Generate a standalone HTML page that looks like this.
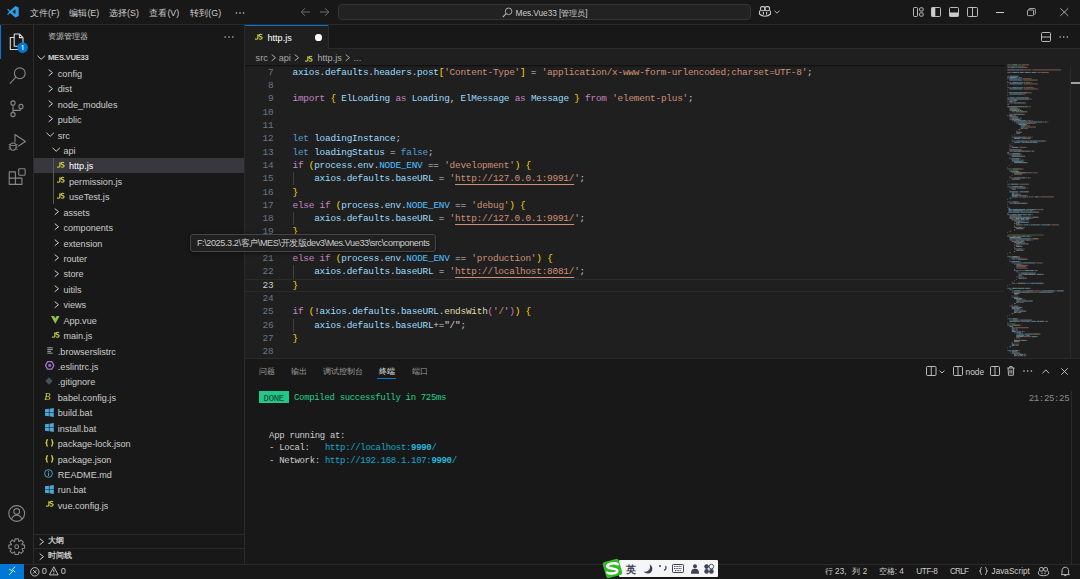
<!DOCTYPE html><html><head><meta charset="utf-8"><style>
*{margin:0;padding:0;box-sizing:border-box}
html,body{width:1080px;height:579px;overflow:hidden;background:#181818}
body{position:relative;font-family:"Liberation Sans", sans-serif;color:#cccccc;font-size:9.1px}
.a{position:absolute;white-space:pre}
.ic{position:absolute;overflow:visible}
.mono{font-family:"Liberation Mono", monospace}
</style></head><body>
<div class="a" style="left:0px;top:0px;width:1080px;height:24px;background:#181818;"></div>
<div class="a" style="left:0px;top:24px;width:1080px;height:1px;background:#2b2b2b;"></div>
<div class="a" style="left:0px;top:25px;width:33px;height:539px;background:#181818;"></div>
<div class="a" style="left:33px;top:25px;width:1px;height:539px;background:#2b2b2b;"></div>
<div class="a" style="left:34px;top:25px;width:210px;height:539px;background:#181818;"></div>
<div class="a" style="left:244px;top:25px;width:1px;height:539px;background:#2b2b2b;"></div>
<div class="a" style="left:245px;top:25px;width:835px;height:334px;background:#1f1f1f;"></div>
<div class="a" style="left:245px;top:25px;width:835px;height:24px;background:#181818;"></div>
<div class="a" style="left:328.5px;top:48.4px;width:751.5px;height:0.8px;background:#2b2b2b;"></div>
<div class="a" style="left:245px;top:24.6px;width:83.5px;height:24.6px;background:#1f1f1f;"></div>
<div class="a" style="left:245px;top:24.6px;width:83.5px;height:1.1px;background:#0078d4;"></div>
<div class="a" style="left:328.3px;top:25px;width:0.8px;height:24px;background:#2b2b2b;"></div>
<div class="a" style="left:245px;top:358.5px;width:835px;height:205.5px;background:#181818;"></div>
<div class="a" style="left:245px;top:358px;width:835px;height:1px;background:#2b2b2b;"></div>
<div class="a" style="left:0px;top:564px;width:1080px;height:15px;background:#181818;"></div>
<div class="a" style="left:0px;top:563.5px;width:1080px;height:0.7px;background:#2b2b2b;"></div>
<div class="a" style="left:0px;top:564px;width:24px;height:15px;background:#0078d4;"></div>
<svg class="ic" style="left:6.5px;top:5.8px;" width="12" height="12" viewBox="0 0 12 12"><path fill-rule="evenodd" d="M8.4 0 L11.7 1.6 V10 L8.4 11.6 L3 6.9 L1 8.9 L0.2 8.2 L2.2 5.8 L0.2 3.4 L1 2.7 L3 4.7 Z M8.4 3.3 L5.4 5.8 L8.4 8.3 Z" fill="#2c9fe6"/></svg>
<div class="a" style="left:30px;top:7.62px;line-height:11.57px;font-size:8.9px;color:#cccccc;">文件(<u style="text-decoration:none">F</u>)</div>
<div class="a" style="left:69.4px;top:7.62px;line-height:11.57px;font-size:8.9px;color:#cccccc;">编辑(E)</div>
<div class="a" style="left:109.1px;top:7.62px;line-height:11.57px;font-size:8.9px;color:#cccccc;">选择(S)</div>
<div class="a" style="left:149.4px;top:7.62px;line-height:11.57px;font-size:8.9px;color:#cccccc;">查看(V)</div>
<div class="a" style="left:190.3px;top:7.62px;line-height:11.57px;font-size:8.9px;color:#cccccc;">转到(G)</div>
<svg class="ic" style="left:233.5px;top:10.7px;" width="12" height="4" viewBox="0 0 12 4"><circle cx="2.4" cy="2" r="0.8" fill="#cccccc"/><circle cx="6" cy="2" r="0.8" fill="#cccccc"/><circle cx="9.6" cy="2" r="0.8" fill="#cccccc"/></svg>
<svg class="ic" style="left:300px;top:7px;" width="11" height="10" viewBox="0 0 11 10"><path d="M10 5 H1.2 M5 1.2 L1.2 5 L5 8.8" stroke="#6b6b6b" stroke-width="1" fill="none"/></svg>
<svg class="ic" style="left:318.5px;top:7px;" width="11" height="10" viewBox="0 0 11 10"><path d="M1 5 H9.8 M6 1.2 L9.8 5 L6 8.8" stroke="#6b6b6b" stroke-width="1" fill="none"/></svg>
<div class="a" style="left:338.3px;top:3.9px;width:412.3px;height:16.1px;background:#222222;border:0.8px solid #353535;border-radius:4px"></div>
<svg class="ic" style="left:502px;top:6.5px;" width="11" height="11" viewBox="0 0 11 11"><circle cx="6.6" cy="4.3" r="3.3" stroke="#bbbbbb" stroke-width="0.9" fill="none"/><path d="M4.2 6.7 L0.8 10.1" stroke="#bbbbbb" stroke-width="1.1"/></svg>
<div class="a" style="left:515.6px;top:7.60px;line-height:10.79px;font-size:8.3px;color:#cccccc;letter-spacing:-0.05px">Mes.Vue33 [管理员]</div>
<svg class="ic" style="left:759.2px;top:6.4px;" width="13" height="11" viewBox="0 0 13 11"><rect x="1.5" y="0.6" width="4.5" height="4.1" rx="1.5" stroke="#cccccc" stroke-width="1.1" fill="none"/><rect x="6" y="0.6" width="4.5" height="4.1" rx="1.5" stroke="#cccccc" stroke-width="1.1" fill="none"/><path d="M1.3 4.4 C0.6 4.9 0.5 5.5 0.5 6.3 V8 C1.9 9.5 3.9 10.2 6 10.2 C8.1 10.2 10.1 9.5 11.5 8 V6.3 C11.5 5.5 11.4 4.9 10.7 4.4" stroke="#cccccc" stroke-width="1.1" fill="none"/><path d="M4.4 6 V8.4 M7.6 6 V8.4" stroke="#cccccc" stroke-width="1.1"/></svg>
<svg class="ic" style="left:774px;top:9.5px;" width="6" height="4" viewBox="0 0 6 4"><path d="M0.5 0.8 L3 3.2 L5.5 0.8" stroke="#cccccc" stroke-width="0.9" fill="none"/></svg>
<svg class="ic" style="left:913px;top:7px;" width="11" height="10" viewBox="0 0 11 10"><rect x="0.5" y="0.5" width="4" height="9" rx="1" stroke="#cccccc" stroke-width="0.9" fill="none"/><rect x="6.6" y="0.8" width="3.6" height="3.2" rx="1" stroke="#cccccc" stroke-width="0.9" fill="none"/><rect x="6.6" y="5.8" width="3.6" height="3.4" rx="1" stroke="#cccccc" stroke-width="0.9" fill="none"/></svg>
<svg class="ic" style="left:930.8px;top:7px;" width="10" height="10" viewBox="0 0 10 10"><rect x="0.5" y="0.5" width="9" height="9" rx="1" stroke="#cccccc" stroke-width="0.9" fill="none"/><rect x="0.5" y="0.5" width="3.8" height="9" fill="#cccccc"/></svg>
<svg class="ic" style="left:948.8px;top:7px;" width="10" height="10" viewBox="0 0 10 10"><rect x="0.5" y="0.5" width="9" height="9" rx="1" stroke="#cccccc" stroke-width="0.9" fill="none"/><rect x="0.5" y="5.5" width="9" height="4" fill="#cccccc"/></svg>
<svg class="ic" style="left:967px;top:7px;" width="11" height="10" viewBox="0 0 11 10"><rect x="0.5" y="0.5" width="10" height="9" rx="1" stroke="#cccccc" stroke-width="0.9" fill="none"/><path d="M5.5 0.5 V9.5" stroke="#cccccc" stroke-width="0.9"/></svg>
<div class="a" style="left:996.3px;top:11.5px;width:7.4px;height:0.8px;background:#cccccc;"></div>
<svg class="ic" style="left:1026.5px;top:8px;" width="9" height="8" viewBox="0 0 9 8"><rect x="0.5" y="2" width="6" height="5.6" rx="0.8" stroke="#cccccc" stroke-width="0.8" fill="none"/><path d="M2 2 V1.5 Q2 0.5 3 0.5 H7.3 Q8.3 0.5 8.3 1.5 V5.6 Q8.3 6.5 7.5 6.5" stroke="#cccccc" stroke-width="0.8" fill="none"/></svg>
<svg class="ic" style="left:1059.7px;top:8.3px;" width="9" height="8" viewBox="0 0 9 8"><path d="M0.3 0.3 L8.3 7.9 M8.3 0.3 L0.3 7.9" stroke="#cccccc" stroke-width="0.8"/></svg>
<div class="a" style="left:0px;top:24.6px;width:1.4px;height:34px;background:#0078d4;"></div>
<svg class="ic" style="left:8.5px;top:32.5px;" width="17" height="19" viewBox="0 0 17 19"><path d="M5.2 1 H10.4 L14 4.6 V13.2 H5.2 Z M10.4 1 V4.6 H14" stroke="#d7d7d7" stroke-width="1.1" fill="none" stroke-linejoin="round"/><path d="M5.2 4.5 H1.3 V16.5 H10 V13.2" stroke="#d7d7d7" stroke-width="1.1" fill="none"/></svg>
<svg class="ic" style="left:17px;top:41.7px;" width="11.2" height="11.2" viewBox="0 0 11.2 11.2"><circle cx="5.6" cy="5.6" r="5.3" fill="#0078d4"/><path d="M4.6 4.1 L5.9 3.3 V8" stroke="#ffffff" stroke-width="1" fill="none"/></svg>
<svg class="ic" style="left:8.6px;top:66.7px;" width="17" height="18" viewBox="0 0 17 18"><circle cx="10.8" cy="6.3" r="5.4" stroke="#868686" stroke-width="1.1" fill="none"/><path d="M6.9 10.2 L0.9 16.6" stroke="#868686" stroke-width="1.1"/></svg>
<svg class="ic" style="left:9.7px;top:100.2px;" width="14" height="18" viewBox="0 0 14 18"><circle cx="3" cy="3" r="2.1" stroke="#868686" stroke-width="1.1" fill="none"/><circle cx="3" cy="14.5" r="2.1" stroke="#868686" stroke-width="1.1" fill="none"/><circle cx="11" cy="6.5" r="2.1" stroke="#868686" stroke-width="1.1" fill="none"/><path d="M3 5.1 V12.4 M11 8.6 V9 C11 9.9 10.4 10.4 9.5 10.4 H3" stroke="#868686" stroke-width="1.1" fill="none"/></svg>
<svg class="ic" style="left:7.6px;top:133px;" width="18" height="19" viewBox="0 0 18 19"><path d="M7 9.3 V1.5 L17.4 8.5 L10.2 13.2" stroke="#868686" stroke-width="1.1" fill="none" stroke-linejoin="round"/><ellipse cx="5.1" cy="13.6" rx="3.1" ry="3.6" stroke="#868686" stroke-width="1.1" fill="none"/><path d="M0.6 11.5 H2 M8.2 11.5 H9.6 M0.6 14 H2 M8.2 14 H9.6 M0.6 16.3 H2 M8.2 16.3 H9.6 M2.5 12.5 H7.7" stroke="#868686" stroke-width="0.9"/></svg>
<svg class="ic" style="left:7.6px;top:167.6px;" width="18" height="18" viewBox="0 0 18 18"><path d="M1.2 3.9 H7.4 V10.1 H13.9 V16.4 H1.2 Z M7.4 10.1 V16.4 M1.2 10.1 H7.4" stroke="#868686" stroke-width="1.1" fill="none" stroke-linejoin="round"/><rect x="10.7" y="0.8" width="6.4" height="6.4" rx="0.6" stroke="#868686" stroke-width="1.1" fill="none"/></svg>
<svg class="ic" style="left:8.2px;top:504.9px;" width="18" height="18" viewBox="0 0 18 18"><circle cx="8.7" cy="8.5" r="7.9" stroke="#868686" stroke-width="1.1" fill="none"/><circle cx="8.7" cy="6.5" r="2.9" stroke="#868686" stroke-width="1.1" fill="none"/><path d="M3.6 14.3 C4.5 11.2 6.2 10.3 8.7 10.3 C11.2 10.3 12.9 11.2 13.8 14.3" stroke="#868686" stroke-width="1.1" fill="none"/></svg>
<svg class="ic" style="left:8.2px;top:537.6px;" width="18" height="18" viewBox="0 0 18 18"><path d="M16.54 7.11 L16.54 10.29 L14.01 10.76 L13.92 11.00 L15.37 13.12 L13.12 15.37 L11.00 13.92 L10.76 14.01 L10.29 16.54 L7.11 16.54 L6.64 14.01 L6.40 13.92 L4.28 15.37 L2.03 13.12 L3.48 11.00 L3.39 10.76 L0.86 10.29 L0.86 7.11 L3.39 6.64 L3.48 6.40 L2.03 4.28 L4.28 2.03 L6.40 3.48 L6.64 3.39 L7.11 0.86 L10.29 0.86 L10.76 3.39 L11.00 3.48 L13.12 2.03 L15.37 4.28 L13.92 6.40 L14.01 6.64 Z" stroke="#868686" stroke-width="1.1" fill="none" stroke-linejoin="round"/><circle cx="8.7" cy="8.7" r="1.9" stroke="#868686" stroke-width="1.1" fill="none"/></svg>
<div class="a" style="left:47.9px;top:32.13px;line-height:10.14px;font-size:7.8px;color:#cccccc;">资源管理器</div>
<svg class="ic" style="left:222.5px;top:35px;" width="12" height="4" viewBox="0 0 12 4"><circle cx="2.1" cy="2" r="0.75" fill="#cccccc"/><circle cx="6" cy="2" r="0.75" fill="#cccccc"/><circle cx="9.9" cy="2" r="0.75" fill="#cccccc"/></svg>
<svg class="ic" style="left:37.0px;top:55.1px;" width="9" height="6" viewBox="0 0 9 6"><path d="M0.5 0.8 L4.2 4.3 L7.9 0.8" stroke="#cccccc" stroke-width="1" fill="none"/></svg>
<div class="a" style="left:48px;top:52.79px;line-height:10.01px;font-size:7.7px;color:#cccccc;font-weight:bold;letter-spacing:-0.3px">MES.VUE33</div>
<div class="a" style="left:33.6px;top:157.57999999999998px;width:210.6px;height:15.43px;background:#37373d;"></div>
<div class="a" style="left:53.1px;top:157.57999999999998px;width:0.8px;height:46.29px;background:#585858;"></div>
<svg class="ic" style="left:47.9px;top:69.11500000000001px;" width="6" height="8" viewBox="0 0 6 8"><path d="M0.7 0.6 L4.5 3.7 L0.7 6.8" stroke="#cccccc" stroke-width="1" fill="none"/></svg>
<div class="a" style="left:57.8px;top:68.80px;line-height:11.83px;font-size:9.1px;color:#cccccc;">config</div>
<svg class="ic" style="left:47.9px;top:84.54500000000002px;" width="6" height="8" viewBox="0 0 6 8"><path d="M0.7 0.6 L4.5 3.7 L0.7 6.8" stroke="#cccccc" stroke-width="1" fill="none"/></svg>
<div class="a" style="left:57.8px;top:84.23px;line-height:11.83px;font-size:9.1px;color:#cccccc;">dist</div>
<svg class="ic" style="left:47.9px;top:99.97500000000001px;" width="6" height="8" viewBox="0 0 6 8"><path d="M0.7 0.6 L4.5 3.7 L0.7 6.8" stroke="#cccccc" stroke-width="1" fill="none"/></svg>
<div class="a" style="left:57.8px;top:99.66px;line-height:11.83px;font-size:9.1px;color:#cccccc;">node_modules</div>
<svg class="ic" style="left:47.9px;top:115.405px;" width="6" height="8" viewBox="0 0 6 8"><path d="M0.7 0.6 L4.5 3.7 L0.7 6.8" stroke="#cccccc" stroke-width="1" fill="none"/></svg>
<div class="a" style="left:57.8px;top:115.09px;line-height:11.83px;font-size:9.1px;color:#cccccc;">public</div>
<svg class="ic" style="left:46.199999999999996px;top:132.035px;" width="9" height="6" viewBox="0 0 9 6"><path d="M0.5 0.8 L4.2 4.3 L7.9 0.8" stroke="#cccccc" stroke-width="1" fill="none"/></svg>
<div class="a" style="left:57.8px;top:130.52px;line-height:11.83px;font-size:9.1px;color:#cccccc;">src</div>
<svg class="ic" style="left:51.8px;top:147.465px;" width="9" height="6" viewBox="0 0 9 6"><path d="M0.5 0.8 L4.2 4.3 L7.9 0.8" stroke="#cccccc" stroke-width="1" fill="none"/></svg>
<div class="a" style="left:63.4px;top:145.95px;line-height:11.83px;font-size:9.1px;color:#cccccc;">api</div>
<svg class="ic" style="left:57.1px;top:161.99499999999998px;" width="9" height="7" viewBox="0 0 9 7"><path transform="scale(0.93,0.86)" d="M3.1 0.4 V4.3 C3.1 5.6 2.5 6.1 1.6 6.1 C1 6.1 0.6 5.9 0.3 5.4 M7.5 1 C7.2 0.5 6.6 0.3 6 0.3 C5.1 0.3 4.5 0.8 4.5 1.6 C4.5 3.3 7.6 2.8 7.6 4.5 C7.6 5.5 6.9 6.1 6 6.1 C5.2 6.1 4.6 5.8 4.2 5.2" stroke="#cbcb41" stroke-width="1.35" fill="none"/></svg>
<div class="a" style="left:69.0px;top:161.38px;line-height:11.83px;font-size:9.1px;color:#ffffff;">http.js</div>
<svg class="ic" style="left:57.1px;top:177.42499999999998px;" width="9" height="7" viewBox="0 0 9 7"><path transform="scale(0.93,0.86)" d="M3.1 0.4 V4.3 C3.1 5.6 2.5 6.1 1.6 6.1 C1 6.1 0.6 5.9 0.3 5.4 M7.5 1 C7.2 0.5 6.6 0.3 6 0.3 C5.1 0.3 4.5 0.8 4.5 1.6 C4.5 3.3 7.6 2.8 7.6 4.5 C7.6 5.5 6.9 6.1 6 6.1 C5.2 6.1 4.6 5.8 4.2 5.2" stroke="#cbcb41" stroke-width="1.35" fill="none"/></svg>
<div class="a" style="left:69.0px;top:176.81px;line-height:11.83px;font-size:9.1px;color:#cccccc;">permission.js</div>
<svg class="ic" style="left:57.1px;top:192.855px;" width="9" height="7" viewBox="0 0 9 7"><path transform="scale(0.93,0.86)" d="M3.1 0.4 V4.3 C3.1 5.6 2.5 6.1 1.6 6.1 C1 6.1 0.6 5.9 0.3 5.4 M7.5 1 C7.2 0.5 6.6 0.3 6 0.3 C5.1 0.3 4.5 0.8 4.5 1.6 C4.5 3.3 7.6 2.8 7.6 4.5 C7.6 5.5 6.9 6.1 6 6.1 C5.2 6.1 4.6 5.8 4.2 5.2" stroke="#cbcb41" stroke-width="1.35" fill="none"/></svg>
<div class="a" style="left:69.0px;top:192.24px;line-height:11.83px;font-size:9.1px;color:#cccccc;">useTest.js</div>
<svg class="ic" style="left:53.5px;top:207.985px;" width="6" height="8" viewBox="0 0 6 8"><path d="M0.7 0.6 L4.5 3.7 L0.7 6.8" stroke="#cccccc" stroke-width="1" fill="none"/></svg>
<div class="a" style="left:63.4px;top:207.67px;line-height:11.83px;font-size:9.1px;color:#cccccc;">assets</div>
<svg class="ic" style="left:53.5px;top:223.41500000000002px;" width="6" height="8" viewBox="0 0 6 8"><path d="M0.7 0.6 L4.5 3.7 L0.7 6.8" stroke="#cccccc" stroke-width="1" fill="none"/></svg>
<div class="a" style="left:63.4px;top:223.10px;line-height:11.83px;font-size:9.1px;color:#cccccc;">components</div>
<svg class="ic" style="left:53.5px;top:238.845px;" width="6" height="8" viewBox="0 0 6 8"><path d="M0.7 0.6 L4.5 3.7 L0.7 6.8" stroke="#cccccc" stroke-width="1" fill="none"/></svg>
<div class="a" style="left:63.4px;top:238.53px;line-height:11.83px;font-size:9.1px;color:#cccccc;">extension</div>
<svg class="ic" style="left:53.5px;top:254.275px;" width="6" height="8" viewBox="0 0 6 8"><path d="M0.7 0.6 L4.5 3.7 L0.7 6.8" stroke="#cccccc" stroke-width="1" fill="none"/></svg>
<div class="a" style="left:63.4px;top:253.96px;line-height:11.83px;font-size:9.1px;color:#cccccc;">router</div>
<svg class="ic" style="left:53.5px;top:269.705px;" width="6" height="8" viewBox="0 0 6 8"><path d="M0.7 0.6 L4.5 3.7 L0.7 6.8" stroke="#cccccc" stroke-width="1" fill="none"/></svg>
<div class="a" style="left:63.4px;top:269.39px;line-height:11.83px;font-size:9.1px;color:#cccccc;">store</div>
<svg class="ic" style="left:53.5px;top:285.13499999999993px;" width="6" height="8" viewBox="0 0 6 8"><path d="M0.7 0.6 L4.5 3.7 L0.7 6.8" stroke="#cccccc" stroke-width="1" fill="none"/></svg>
<div class="a" style="left:63.4px;top:284.82px;line-height:11.83px;font-size:9.1px;color:#cccccc;">uitils</div>
<svg class="ic" style="left:53.5px;top:300.56499999999994px;" width="6" height="8" viewBox="0 0 6 8"><path d="M0.7 0.6 L4.5 3.7 L0.7 6.8" stroke="#cccccc" stroke-width="1" fill="none"/></svg>
<div class="a" style="left:63.4px;top:300.25px;line-height:11.83px;font-size:9.1px;color:#cccccc;">views</div>
<svg class="ic" style="left:51.3px;top:315.59499999999997px;" width="9" height="8.2" viewBox="0 0 9 8.2"><path d="M0 0 H3 L4.3 2.3 L5.6 0 H8.6 L4.3 7.8 Z" fill="#8dc149"/></svg>
<div class="a" style="left:63.4px;top:315.68px;line-height:11.83px;font-size:9.1px;color:#cccccc;">App.vue</div>
<svg class="ic" style="left:51.49999999999999px;top:331.725px;" width="9" height="7" viewBox="0 0 9 7"><path transform="scale(0.93,0.86)" d="M3.1 0.4 V4.3 C3.1 5.6 2.5 6.1 1.6 6.1 C1 6.1 0.6 5.9 0.3 5.4 M7.5 1 C7.2 0.5 6.6 0.3 6 0.3 C5.1 0.3 4.5 0.8 4.5 1.6 C4.5 3.3 7.6 2.8 7.6 4.5 C7.6 5.5 6.9 6.1 6 6.1 C5.2 6.1 4.6 5.8 4.2 5.2" stroke="#cbcb41" stroke-width="1.35" fill="none"/></svg>
<div class="a" style="left:63.4px;top:331.11px;line-height:11.83px;font-size:9.1px;color:#cccccc;">main.js</div>
<svg class="ic" style="left:47.199999999999996px;top:346.85499999999996px;" width="7" height="7" viewBox="0 0 7 7"><path d="M0.3 0.8 H5.8 M0.3 2.6 H5.8 M0.3 4.4 H4 M0.3 6.2 H5.8" stroke="#9aa0a6" stroke-width="1"/></svg>
<div class="a" style="left:57.8px;top:346.54px;line-height:11.83px;font-size:9.1px;color:#cccccc;">.browserslistrc</div>
<svg class="ic" style="left:44.599999999999994px;top:361.485px;" width="10" height="9" viewBox="0 0 10 9"><path d="M2.6 0.6 H6.8 L8.9 4.4 L6.8 8.2 H2.6 L0.5 4.4 Z" fill="none" stroke="#a074c4" stroke-width="1.3" stroke-linejoin="round"/><circle cx="4.7" cy="4.4" r="1.7" fill="#8f5fc0"/></svg>
<div class="a" style="left:57.8px;top:361.97px;line-height:11.83px;font-size:9.1px;color:#cccccc;">.eslintrc.js</div>
<svg class="ic" style="left:44.8px;top:377.315px;" width="8" height="8" viewBox="0 0 8 8"><path d="M4 0.3 L7.7 4 L4 7.7 L0.3 4 Z" fill="#41535b"/></svg>
<div class="a" style="left:57.8px;top:377.40px;line-height:11.83px;font-size:9.1px;color:#cccccc;">.gitignore</div>
<div class="a" style="left:44.30px;top:391.74px;font-size:10px;line-height:10px;color:#cbcb41;font-style:italic;font-family:'Liberation Serif',serif">B</div>
<div class="a" style="left:57.8px;top:392.83px;line-height:11.83px;font-size:9.1px;color:#cccccc;">babel.config.js</div>
<svg class="ic" style="left:44.5px;top:407.87499999999994px;" width="9" height="10" viewBox="0 0 9 10"><path d="M0 1.3 L3.9 0.8 V4.2 H0 Z M4.5 0.7 L8.8 0.1 V4.2 H4.5 Z M0 4.8 H3.9 V8.2 L0 7.7 Z M4.5 4.8 H8.8 V8.9 L4.5 8.3 Z" fill="#4fa7d8"/></svg>
<div class="a" style="left:57.8px;top:408.26px;line-height:11.83px;font-size:9.1px;color:#cccccc;">build.bat</div>
<svg class="ic" style="left:44.5px;top:423.30499999999995px;" width="9" height="10" viewBox="0 0 9 10"><path d="M0 1.3 L3.9 0.8 V4.2 H0 Z M4.5 0.7 L8.8 0.1 V4.2 H4.5 Z M0 4.8 H3.9 V8.2 L0 7.7 Z M4.5 4.8 H8.8 V8.9 L4.5 8.3 Z" fill="#4fa7d8"/></svg>
<div class="a" style="left:57.8px;top:423.69px;line-height:11.83px;font-size:9.1px;color:#cccccc;">install.bat</div>
<svg class="ic" style="left:44.8px;top:439.335px;" width="9" height="8" viewBox="0 0 9 8"><path d="M2.9 0.6 C2 0.6 1.7 1 1.7 1.8 V2.9 C1.7 3.5 1.3 3.8 0.4 3.8 C1.3 3.8 1.7 4.1 1.7 4.7 V5.8 C1.7 6.6 2 7 2.9 7 M6.1 0.6 C7 0.6 7.3 1 7.3 1.8 V2.9 C7.3 3.5 7.7 3.8 8.6 3.8 C7.7 3.8 7.3 4.1 7.3 4.7 V5.8 C7.3 6.6 7 7 6.1 7" stroke="#cbcb41" stroke-width="1.3" fill="none"/></svg>
<div class="a" style="left:57.8px;top:439.12px;line-height:11.83px;font-size:9.1px;color:#cccccc;">package-lock.json</div>
<svg class="ic" style="left:44.8px;top:454.765px;" width="9" height="8" viewBox="0 0 9 8"><path d="M2.9 0.6 C2 0.6 1.7 1 1.7 1.8 V2.9 C1.7 3.5 1.3 3.8 0.4 3.8 C1.3 3.8 1.7 4.1 1.7 4.7 V5.8 C1.7 6.6 2 7 2.9 7 M6.1 0.6 C7 0.6 7.3 1 7.3 1.8 V2.9 C7.3 3.5 7.7 3.8 8.6 3.8 C7.7 3.8 7.3 4.1 7.3 4.7 V5.8 C7.3 6.6 7 7 6.1 7" stroke="#cbcb41" stroke-width="1.3" fill="none"/></svg>
<div class="a" style="left:57.8px;top:454.55px;line-height:11.83px;font-size:9.1px;color:#cccccc;">package.json</div>
<svg class="ic" style="left:44.3px;top:469.495px;" width="9" height="9" viewBox="0 0 9 9"><circle cx="4.5" cy="4.5" r="3.9" stroke="#519aba" stroke-width="1" fill="none"/><path d="M4.5 3.6 V7" stroke="#519aba" stroke-width="1.1"/><circle cx="4.5" cy="2.3" r="0.6" fill="#519aba"/></svg>
<div class="a" style="left:57.8px;top:469.98px;line-height:11.83px;font-size:9.1px;color:#cccccc;">README.md</div>
<svg class="ic" style="left:44.5px;top:485.025px;" width="9" height="10" viewBox="0 0 9 10"><path d="M0 1.3 L3.9 0.8 V4.2 H0 Z M4.5 0.7 L8.8 0.1 V4.2 H4.5 Z M0 4.8 H3.9 V8.2 L0 7.7 Z M4.5 4.8 H8.8 V8.9 L4.5 8.3 Z" fill="#4fa7d8"/></svg>
<div class="a" style="left:57.8px;top:485.41px;line-height:11.83px;font-size:9.1px;color:#cccccc;">run.bat</div>
<svg class="ic" style="left:45.9px;top:501.455px;" width="9" height="7" viewBox="0 0 9 7"><path transform="scale(0.93,0.86)" d="M3.1 0.4 V4.3 C3.1 5.6 2.5 6.1 1.6 6.1 C1 6.1 0.6 5.9 0.3 5.4 M7.5 1 C7.2 0.5 6.6 0.3 6 0.3 C5.1 0.3 4.5 0.8 4.5 1.6 C4.5 3.3 7.6 2.8 7.6 4.5 C7.6 5.5 6.9 6.1 6 6.1 C5.2 6.1 4.6 5.8 4.2 5.2" stroke="#cbcb41" stroke-width="1.35" fill="none"/></svg>
<div class="a" style="left:57.8px;top:500.84px;line-height:11.83px;font-size:9.1px;color:#cccccc;">vue.config.js</div>
<div class="a" style="left:34px;top:533.6px;width:210px;height:0.8px;background:#2b2b2b;"></div>
<div class="a" style="left:34px;top:548.1px;width:210px;height:0.8px;background:#2b2b2b;"></div>
<svg class="ic" style="left:39px;top:537.9px;" width="6" height="8" viewBox="0 0 6 8"><path d="M0.7 0.6 L4.5 3.7 L0.7 6.8" stroke="#cccccc" stroke-width="1" fill="none"/></svg>
<div class="a" style="left:47.8px;top:536.23px;line-height:10.14px;font-size:7.8px;color:#cccccc;font-weight:bold">大纲</div>
<svg class="ic" style="left:39px;top:552.8px;" width="6" height="8" viewBox="0 0 6 8"><path d="M0.7 0.6 L4.5 3.7 L0.7 6.8" stroke="#cccccc" stroke-width="1" fill="none"/></svg>
<div class="a" style="left:47.8px;top:551.13px;line-height:10.14px;font-size:7.8px;color:#cccccc;font-weight:bold">时间线</div>
<!--BODY2-->
<svg class="ic" style="left:254.70000000000002px;top:34.0px;" width="9" height="7" viewBox="0 0 9 7"><path transform="scale(0.93,0.86)" d="M3.1 0.4 V4.3 C3.1 5.6 2.5 6.1 1.6 6.1 C1 6.1 0.6 5.9 0.3 5.4 M7.5 1 C7.2 0.5 6.6 0.3 6 0.3 C5.1 0.3 4.5 0.8 4.5 1.6 C4.5 3.3 7.6 2.8 7.6 4.5 C7.6 5.5 6.9 6.1 6 6.1 C5.2 6.1 4.6 5.8 4.2 5.2" stroke="#cbcb41" stroke-width="1.35" fill="none"/></svg>
<div class="a" style="left:267.5px;top:32.59px;line-height:11.83px;font-size:9.1px;color:#ffffff;">http.js</div>
<div class="a" style="left:315.2px;top:34.2px;width:6.7px;height:6.7px;background:#ffffff;border-radius:50%"></div>
<svg class="ic" style="left:1041.1px;top:31.9px;" width="10" height="10" viewBox="0 0 10 10"><rect x="0.5" y="0.5" width="9" height="9" rx="1" stroke="#cccccc" stroke-width="0.9" fill="none"/><path d="M0.5 5 H9.5" stroke="#cccccc" stroke-width="0.9"/></svg>
<svg class="ic" style="left:1058px;top:35px;" width="12" height="4" viewBox="0 0 12 4"><circle cx="2.1" cy="2" r="0.75" fill="#cccccc"/><circle cx="5.7" cy="2" r="0.75" fill="#cccccc"/><circle cx="9.3" cy="2" r="0.75" fill="#cccccc"/></svg>
<div class="a" style="left:255.6px;top:52.79px;line-height:11.83px;font-size:9.1px;color:#a9a9a9;">src</div>
<svg class="ic" style="left:270.6px;top:54.0px;" width="6" height="8" viewBox="0 0 6 8"><path d="M0.7 0.6 L4.5 3.7 L0.7 6.8" stroke="#a9a9a9" stroke-width="1" fill="none"/></svg>
<div class="a" style="left:278.7px;top:52.79px;line-height:11.83px;font-size:9.1px;color:#a9a9a9;">api</div>
<svg class="ic" style="left:294.2px;top:54.0px;" width="6" height="8" viewBox="0 0 6 8"><path d="M0.7 0.6 L4.5 3.7 L0.7 6.8" stroke="#a9a9a9" stroke-width="1" fill="none"/></svg>
<svg class="ic" style="left:304.9px;top:56.4px;" width="9" height="7" viewBox="0 0 9 7"><path transform="scale(0.93,0.86)" d="M3.1 0.4 V4.3 C3.1 5.6 2.5 6.1 1.6 6.1 C1 6.1 0.6 5.9 0.3 5.4 M7.5 1 C7.2 0.5 6.6 0.3 6 0.3 C5.1 0.3 4.5 0.8 4.5 1.6 C4.5 3.3 7.6 2.8 7.6 4.5 C7.6 5.5 6.9 6.1 6 6.1 C5.2 6.1 4.6 5.8 4.2 5.2" stroke="#cbcb41" stroke-width="1.35" fill="none"/></svg>
<div class="a" style="left:317.5px;top:52.79px;line-height:11.83px;font-size:9.1px;color:#a9a9a9;">http.js</div>
<svg class="ic" style="left:345.4px;top:54.0px;" width="6" height="8" viewBox="0 0 6 8"><path d="M0.7 0.6 L4.5 3.7 L0.7 6.8" stroke="#a9a9a9" stroke-width="1" fill="none"/></svg>
<div class="a" style="left:353.6px;top:52.79px;line-height:11.83px;font-size:9.1px;color:#a9a9a9;">...</div>
<div class="a" style="left:245px;top:64.8px;width:760px;height:2.5px;background:linear-gradient(#0d0d0d,rgba(0,0,0,0))"></div>
<div class="a" style="left:245px;top:279.1px;width:758.5px;height:12.6px;background:transparent;border-top:0.9px solid #2a2a2a;border-bottom:0.9px solid #2a2a2a"></div>
<div class="a" style="left:292.8px;top:172.2px;width:0.8px;height:13.3px;background:#404040;"></div>
<div class="a" style="left:292.8px;top:212.10000000000002px;width:0.8px;height:13.3px;background:#404040;"></div>
<div class="a" style="left:292.8px;top:265.3px;width:0.8px;height:13.3px;background:#404040;"></div>
<div class="a" style="left:292.8px;top:318.5px;width:0.8px;height:13.3px;background:#404040;"></div>
<div class="a mono" style="left:245px;width:28.4px;text-align:right;top:65.80px;height:13.3px;line-height:13.3px;font-size:9.4px;letter-spacing:-0.21px;color:#6e7681">7</div>
<div class="a mono" style="left:292.5px;top:65.80px;height:13.3px;line-height:13.3px;font-size:9.4px;letter-spacing:-0.21px"><span style="color:#9cdcfe">axios</span><span style="color:#cccccc">.</span><span style="color:#9cdcfe">defaults</span><span style="color:#cccccc">.</span><span style="color:#9cdcfe">headers</span><span style="color:#cccccc">.</span><span style="color:#9cdcfe">post</span><span style="color:#ffd700">[</span><span style="color:#ce9178">&#x27;Content-Type&#x27;</span><span style="color:#ffd700">]</span><span style="color:#cccccc"> = </span><span style="color:#ce9178">&#x27;application/x-www-form-urlencoded;charset=UTF-8&#x27;</span><span style="color:#cccccc">;</span></div>
<div class="a mono" style="left:245px;width:28.4px;text-align:right;top:79.10px;height:13.3px;line-height:13.3px;font-size:9.4px;letter-spacing:-0.21px;color:#6e7681">8</div>
<div class="a mono" style="left:245px;width:28.4px;text-align:right;top:92.40px;height:13.3px;line-height:13.3px;font-size:9.4px;letter-spacing:-0.21px;color:#6e7681">9</div>
<div class="a mono" style="left:292.5px;top:92.40px;height:13.3px;line-height:13.3px;font-size:9.4px;letter-spacing:-0.21px"><span style="color:#c586c0">import</span><span style="color:#cccccc"> </span><span style="color:#ffd700">{</span><span style="color:#cccccc"> </span><span style="color:#9cdcfe">ElLoading</span><span style="color:#cccccc"> </span><span style="color:#c586c0">as</span><span style="color:#cccccc"> </span><span style="color:#9cdcfe">Loading</span><span style="color:#cccccc">, </span><span style="color:#9cdcfe">ElMessage</span><span style="color:#cccccc"> </span><span style="color:#c586c0">as</span><span style="color:#cccccc"> </span><span style="color:#9cdcfe">Message</span><span style="color:#cccccc"> </span><span style="color:#ffd700">}</span><span style="color:#cccccc"> </span><span style="color:#c586c0">from</span><span style="color:#cccccc"> </span><span style="color:#ce9178">&#x27;element-plus&#x27;</span><span style="color:#cccccc">;</span></div>
<div class="a mono" style="left:245px;width:28.4px;text-align:right;top:105.70px;height:13.3px;line-height:13.3px;font-size:9.4px;letter-spacing:-0.21px;color:#6e7681">10</div>
<div class="a mono" style="left:245px;width:28.4px;text-align:right;top:119.00px;height:13.3px;line-height:13.3px;font-size:9.4px;letter-spacing:-0.21px;color:#6e7681">11</div>
<div class="a mono" style="left:245px;width:28.4px;text-align:right;top:132.30px;height:13.3px;line-height:13.3px;font-size:9.4px;letter-spacing:-0.21px;color:#6e7681">12</div>
<div class="a mono" style="left:292.5px;top:132.30px;height:13.3px;line-height:13.3px;font-size:9.4px;letter-spacing:-0.21px"><span style="color:#569cd6">let</span><span style="color:#cccccc"> </span><span style="color:#9cdcfe">loadingInstance</span><span style="color:#cccccc">;</span></div>
<div class="a mono" style="left:245px;width:28.4px;text-align:right;top:145.60px;height:13.3px;line-height:13.3px;font-size:9.4px;letter-spacing:-0.21px;color:#6e7681">13</div>
<div class="a mono" style="left:292.5px;top:145.60px;height:13.3px;line-height:13.3px;font-size:9.4px;letter-spacing:-0.21px"><span style="color:#569cd6">let</span><span style="color:#cccccc"> </span><span style="color:#9cdcfe">loadingStatus</span><span style="color:#cccccc"> = </span><span style="color:#569cd6">false</span><span style="color:#cccccc">;</span></div>
<div class="a mono" style="left:245px;width:28.4px;text-align:right;top:158.90px;height:13.3px;line-height:13.3px;font-size:9.4px;letter-spacing:-0.21px;color:#6e7681">14</div>
<div class="a mono" style="left:292.5px;top:158.90px;height:13.3px;line-height:13.3px;font-size:9.4px;letter-spacing:-0.21px"><span style="color:#c586c0">if</span><span style="color:#cccccc"> </span><span style="color:#ffd700">(</span><span style="color:#9cdcfe">process</span><span style="color:#cccccc">.</span><span style="color:#9cdcfe">env</span><span style="color:#cccccc">.</span><span style="color:#4fc1ff">NODE_ENV</span><span style="color:#cccccc"> == </span><span style="color:#ce9178">&#x27;development&#x27;</span><span style="color:#ffd700">)</span><span style="color:#cccccc"> </span><span style="color:#ffd700">{</span></div>
<div class="a mono" style="left:245px;width:28.4px;text-align:right;top:172.20px;height:13.3px;line-height:13.3px;font-size:9.4px;letter-spacing:-0.21px;color:#6e7681">15</div>
<div class="a mono" style="left:292.5px;top:172.20px;height:13.3px;line-height:13.3px;font-size:9.4px;letter-spacing:-0.21px"><span style="color:#cccccc">    </span><span style="color:#9cdcfe">axios</span><span style="color:#cccccc">.</span><span style="color:#9cdcfe">defaults</span><span style="color:#cccccc">.</span><span style="color:#9cdcfe">baseURL</span><span style="color:#cccccc"> = </span><span style="color:#ce9178">&#x27;</span><span style="color:#ce9178;text-decoration:underline;text-underline-offset:2.6px;text-decoration-thickness:0.9px;text-decoration-skip-ink:none">http://127.0.0.1:9991/</span><span style="color:#ce9178">&#x27;</span><span style="color:#cccccc">;</span></div>
<div class="a mono" style="left:245px;width:28.4px;text-align:right;top:185.50px;height:13.3px;line-height:13.3px;font-size:9.4px;letter-spacing:-0.21px;color:#6e7681">16</div>
<div class="a mono" style="left:292.5px;top:185.50px;height:13.3px;line-height:13.3px;font-size:9.4px;letter-spacing:-0.21px"><span style="color:#ffd700">}</span></div>
<div class="a mono" style="left:245px;width:28.4px;text-align:right;top:198.80px;height:13.3px;line-height:13.3px;font-size:9.4px;letter-spacing:-0.21px;color:#6e7681">17</div>
<div class="a mono" style="left:292.5px;top:198.80px;height:13.3px;line-height:13.3px;font-size:9.4px;letter-spacing:-0.21px"><span style="color:#c586c0">else</span><span style="color:#cccccc"> </span><span style="color:#c586c0">if</span><span style="color:#cccccc"> </span><span style="color:#ffd700">(</span><span style="color:#9cdcfe">process</span><span style="color:#cccccc">.</span><span style="color:#9cdcfe">env</span><span style="color:#cccccc">.</span><span style="color:#4fc1ff">NODE_ENV</span><span style="color:#cccccc"> == </span><span style="color:#ce9178">&#x27;debug&#x27;</span><span style="color:#ffd700">)</span><span style="color:#cccccc"> </span><span style="color:#ffd700">{</span></div>
<div class="a mono" style="left:245px;width:28.4px;text-align:right;top:212.10px;height:13.3px;line-height:13.3px;font-size:9.4px;letter-spacing:-0.21px;color:#6e7681">18</div>
<div class="a mono" style="left:292.5px;top:212.10px;height:13.3px;line-height:13.3px;font-size:9.4px;letter-spacing:-0.21px"><span style="color:#cccccc">    </span><span style="color:#9cdcfe">axios</span><span style="color:#cccccc">.</span><span style="color:#9cdcfe">defaults</span><span style="color:#cccccc">.</span><span style="color:#9cdcfe">baseURL</span><span style="color:#cccccc"> = </span><span style="color:#ce9178">&#x27;</span><span style="color:#ce9178;text-decoration:underline;text-underline-offset:2.6px;text-decoration-thickness:0.9px;text-decoration-skip-ink:none">http://127.0.0.1:9991/</span><span style="color:#ce9178">&#x27;</span><span style="color:#cccccc">;</span></div>
<div class="a mono" style="left:245px;width:28.4px;text-align:right;top:225.40px;height:13.3px;line-height:13.3px;font-size:9.4px;letter-spacing:-0.21px;color:#6e7681">19</div>
<div class="a mono" style="left:292.5px;top:225.40px;height:13.3px;line-height:13.3px;font-size:9.4px;letter-spacing:-0.21px"><span style="color:#ffd700">}</span></div>
<div class="a mono" style="left:245px;width:28.4px;text-align:right;top:238.70px;height:13.3px;line-height:13.3px;font-size:9.4px;letter-spacing:-0.21px;color:#6e7681">20</div>
<div class="a mono" style="left:245px;width:28.4px;text-align:right;top:252.00px;height:13.3px;line-height:13.3px;font-size:9.4px;letter-spacing:-0.21px;color:#6e7681">21</div>
<div class="a mono" style="left:292.5px;top:252.00px;height:13.3px;line-height:13.3px;font-size:9.4px;letter-spacing:-0.21px"><span style="color:#c586c0">else</span><span style="color:#cccccc"> </span><span style="color:#c586c0">if</span><span style="color:#cccccc"> </span><span style="color:#ffd700">(</span><span style="color:#9cdcfe">process</span><span style="color:#cccccc">.</span><span style="color:#9cdcfe">env</span><span style="color:#cccccc">.</span><span style="color:#4fc1ff">NODE_ENV</span><span style="color:#cccccc"> == </span><span style="color:#ce9178">&#x27;production&#x27;</span><span style="color:#ffd700">)</span><span style="color:#cccccc"> </span><span style="color:#ffd700">{</span></div>
<div class="a mono" style="left:245px;width:28.4px;text-align:right;top:265.30px;height:13.3px;line-height:13.3px;font-size:9.4px;letter-spacing:-0.21px;color:#6e7681">22</div>
<div class="a mono" style="left:292.5px;top:265.30px;height:13.3px;line-height:13.3px;font-size:9.4px;letter-spacing:-0.21px"><span style="color:#cccccc">    </span><span style="color:#9cdcfe">axios</span><span style="color:#cccccc">.</span><span style="color:#9cdcfe">defaults</span><span style="color:#cccccc">.</span><span style="color:#9cdcfe">baseURL</span><span style="color:#cccccc"> = </span><span style="color:#ce9178">&#x27;</span><span style="color:#ce9178;text-decoration:underline;text-underline-offset:2.6px;text-decoration-thickness:0.9px;text-decoration-skip-ink:none">http://localhost:8081/</span><span style="color:#ce9178">&#x27;</span><span style="color:#cccccc">;</span></div>
<div class="a mono" style="left:245px;width:28.4px;text-align:right;top:278.60px;height:13.3px;line-height:13.3px;font-size:9.4px;letter-spacing:-0.21px;color:#cccccc">23</div>
<div class="a mono" style="left:292.5px;top:278.60px;height:13.3px;line-height:13.3px;font-size:9.4px;letter-spacing:-0.21px"><span style="color:#ffd700">}</span></div>
<div class="a mono" style="left:245px;width:28.4px;text-align:right;top:291.90px;height:13.3px;line-height:13.3px;font-size:9.4px;letter-spacing:-0.21px;color:#6e7681">24</div>
<div class="a mono" style="left:245px;width:28.4px;text-align:right;top:305.20px;height:13.3px;line-height:13.3px;font-size:9.4px;letter-spacing:-0.21px;color:#6e7681">25</div>
<div class="a mono" style="left:292.5px;top:305.20px;height:13.3px;line-height:13.3px;font-size:9.4px;letter-spacing:-0.21px"><span style="color:#c586c0">if</span><span style="color:#cccccc"> </span><span style="color:#ffd700">(</span><span style="color:#cccccc">!</span><span style="color:#9cdcfe">axios</span><span style="color:#cccccc">.</span><span style="color:#9cdcfe">defaults</span><span style="color:#cccccc">.</span><span style="color:#9cdcfe">baseURL</span><span style="color:#cccccc">.</span><span style="color:#dcdcaa">endsWith</span><span style="color:#da70d6">(</span><span style="color:#ce9178">&#x27;/&#x27;</span><span style="color:#da70d6">)</span><span style="color:#ffd700">)</span><span style="color:#cccccc"> </span><span style="color:#ffd700">{</span></div>
<div class="a mono" style="left:245px;width:28.4px;text-align:right;top:318.50px;height:13.3px;line-height:13.3px;font-size:9.4px;letter-spacing:-0.21px;color:#6e7681">26</div>
<div class="a mono" style="left:292.5px;top:318.50px;height:13.3px;line-height:13.3px;font-size:9.4px;letter-spacing:-0.21px"><span style="color:#cccccc">    </span><span style="color:#9cdcfe">axios</span><span style="color:#cccccc">.</span><span style="color:#9cdcfe">defaults</span><span style="color:#cccccc">.</span><span style="color:#9cdcfe">baseURL</span><span style="color:#cccccc">+=</span><span style="color:#d4d4d4">&quot;/&quot;</span><span style="color:#cccccc">;</span></div>
<div class="a mono" style="left:245px;width:28.4px;text-align:right;top:331.80px;height:13.3px;line-height:13.3px;font-size:9.4px;letter-spacing:-0.21px;color:#6e7681">27</div>
<div class="a mono" style="left:292.5px;top:331.80px;height:13.3px;line-height:13.3px;font-size:9.4px;letter-spacing:-0.21px"><span style="color:#ffd700">}</span></div>
<div class="a mono" style="left:245px;width:28.4px;text-align:right;top:345.10px;height:13.3px;line-height:13.3px;font-size:9.4px;letter-spacing:-0.21px;color:#6e7681">28</div>
<svg class="ic" style="left:1005px;top:64px;clip-path:inset(0 0 0 0)" width="62" height="293" viewBox="0 0 62 293"><g opacity="0.5"><rect x="2.30" y="0.30" width="3.36" height="1.05" fill="#c586c0"/><rect x="6.22" y="0.30" width="0.56" height="1.05" fill="#bbbbbb"/><rect x="7.34" y="0.30" width="5.04" height="1.05" fill="#9cdcfe"/><rect x="12.94" y="0.30" width="0.56" height="1.05" fill="#bbbbbb"/><rect x="14.06" y="0.30" width="2.24" height="1.05" fill="#c586c0"/><rect x="16.86" y="0.30" width="6.72" height="1.05" fill="#ce9178"/><rect x="23.58" y="0.30" width="0.56" height="1.05" fill="#bbbbbb"/><rect x="2.30" y="1.57" width="17.36" height="1.05" fill="#6a9955"/><rect x="2.30" y="2.84" width="3.36" height="1.05" fill="#c586c0"/><rect x="6.22" y="2.84" width="3.36" height="1.05" fill="#9cdcfe"/><rect x="10.14" y="2.84" width="2.24" height="1.05" fill="#c586c0"/><rect x="12.94" y="2.84" width="9.52" height="1.05" fill="#ce9178"/><rect x="2.30" y="5.38" width="2.80" height="1.05" fill="#9cdcfe"/><rect x="5.10" y="5.38" width="0.56" height="1.05" fill="#bbbbbb"/><rect x="5.66" y="5.38" width="4.48" height="1.05" fill="#9cdcfe"/><rect x="10.14" y="5.38" width="0.56" height="1.05" fill="#bbbbbb"/><rect x="10.70" y="5.38" width="3.92" height="1.05" fill="#9cdcfe"/><rect x="14.62" y="5.38" width="0.56" height="1.05" fill="#bbbbbb"/><rect x="15.18" y="5.38" width="2.24" height="1.05" fill="#9cdcfe"/><rect x="17.42" y="5.38" width="0.56" height="1.05" fill="#bbbbbb"/><rect x="17.98" y="5.38" width="7.84" height="1.05" fill="#ce9178"/><rect x="25.82" y="5.38" width="0.56" height="1.05" fill="#bbbbbb"/><rect x="26.94" y="5.38" width="0.56" height="1.05" fill="#bbbbbb"/><rect x="28.06" y="5.38" width="27.44" height="1.05" fill="#ce9178"/><rect x="55.50" y="5.38" width="0.56" height="1.05" fill="#bbbbbb"/><rect x="2.30" y="7.92" width="3.36" height="1.05" fill="#c586c0"/><rect x="6.22" y="7.92" width="0.56" height="1.05" fill="#bbbbbb"/><rect x="7.34" y="7.92" width="5.04" height="1.05" fill="#9cdcfe"/><rect x="12.94" y="7.92" width="1.12" height="1.05" fill="#9cdcfe"/><rect x="14.62" y="7.92" width="3.92" height="1.05" fill="#9cdcfe"/><rect x="18.54" y="7.92" width="0.56" height="1.05" fill="#bbbbbb"/><rect x="19.66" y="7.92" width="5.04" height="1.05" fill="#9cdcfe"/><rect x="25.26" y="7.92" width="1.12" height="1.05" fill="#9cdcfe"/><rect x="26.94" y="7.92" width="3.92" height="1.05" fill="#9cdcfe"/><rect x="31.42" y="7.92" width="0.56" height="1.05" fill="#bbbbbb"/><rect x="32.54" y="7.92" width="2.24" height="1.05" fill="#c586c0"/><rect x="35.34" y="7.92" width="7.84" height="1.05" fill="#ce9178"/><rect x="43.18" y="7.92" width="0.56" height="1.05" fill="#bbbbbb"/><rect x="2.30" y="11.73" width="1.68" height="1.05" fill="#569cd6"/><rect x="4.54" y="11.73" width="8.40" height="1.05" fill="#9cdcfe"/><rect x="12.94" y="11.73" width="0.56" height="1.05" fill="#bbbbbb"/><rect x="2.30" y="13.00" width="1.68" height="1.05" fill="#569cd6"/><rect x="4.54" y="13.00" width="7.28" height="1.05" fill="#9cdcfe"/><rect x="12.38" y="13.00" width="0.56" height="1.05" fill="#bbbbbb"/><rect x="13.50" y="13.00" width="2.80" height="1.05" fill="#569cd6"/><rect x="16.30" y="13.00" width="0.56" height="1.05" fill="#bbbbbb"/><rect x="2.30" y="14.27" width="1.12" height="1.05" fill="#c586c0"/><rect x="3.98" y="14.27" width="0.56" height="1.05" fill="#bbbbbb"/><rect x="4.54" y="14.27" width="3.92" height="1.05" fill="#9cdcfe"/><rect x="8.46" y="14.27" width="0.56" height="1.05" fill="#bbbbbb"/><rect x="9.02" y="14.27" width="1.68" height="1.05" fill="#9cdcfe"/><rect x="10.70" y="14.27" width="0.56" height="1.05" fill="#bbbbbb"/><rect x="11.26" y="14.27" width="4.48" height="1.05" fill="#4fc1ff"/><rect x="16.30" y="14.27" width="1.12" height="1.05" fill="#bbbbbb"/><rect x="17.98" y="14.27" width="7.28" height="1.05" fill="#ce9178"/><rect x="25.26" y="14.27" width="0.56" height="1.05" fill="#bbbbbb"/><rect x="26.38" y="14.27" width="0.56" height="1.05" fill="#bbbbbb"/><rect x="4.54" y="15.54" width="2.80" height="1.05" fill="#9cdcfe"/><rect x="7.34" y="15.54" width="0.56" height="1.05" fill="#bbbbbb"/><rect x="7.90" y="15.54" width="4.48" height="1.05" fill="#9cdcfe"/><rect x="12.38" y="15.54" width="0.56" height="1.05" fill="#bbbbbb"/><rect x="12.94" y="15.54" width="3.92" height="1.05" fill="#9cdcfe"/><rect x="17.42" y="15.54" width="0.56" height="1.05" fill="#bbbbbb"/><rect x="18.54" y="15.54" width="13.44" height="1.05" fill="#ce9178"/><rect x="31.98" y="15.54" width="0.56" height="1.05" fill="#bbbbbb"/><rect x="2.30" y="16.81" width="0.56" height="1.05" fill="#bbbbbb"/><rect x="2.30" y="18.08" width="2.24" height="1.05" fill="#c586c0"/><rect x="5.10" y="18.08" width="1.12" height="1.05" fill="#c586c0"/><rect x="6.78" y="18.08" width="0.56" height="1.05" fill="#bbbbbb"/><rect x="7.34" y="18.08" width="3.92" height="1.05" fill="#9cdcfe"/><rect x="11.26" y="18.08" width="0.56" height="1.05" fill="#bbbbbb"/><rect x="11.82" y="18.08" width="1.68" height="1.05" fill="#9cdcfe"/><rect x="13.50" y="18.08" width="0.56" height="1.05" fill="#bbbbbb"/><rect x="14.06" y="18.08" width="4.48" height="1.05" fill="#4fc1ff"/><rect x="19.10" y="18.08" width="1.12" height="1.05" fill="#bbbbbb"/><rect x="20.78" y="18.08" width="3.92" height="1.05" fill="#ce9178"/><rect x="24.70" y="18.08" width="0.56" height="1.05" fill="#bbbbbb"/><rect x="25.82" y="18.08" width="0.56" height="1.05" fill="#bbbbbb"/><rect x="4.54" y="19.35" width="2.80" height="1.05" fill="#9cdcfe"/><rect x="7.34" y="19.35" width="0.56" height="1.05" fill="#bbbbbb"/><rect x="7.90" y="19.35" width="4.48" height="1.05" fill="#9cdcfe"/><rect x="12.38" y="19.35" width="0.56" height="1.05" fill="#bbbbbb"/><rect x="12.94" y="19.35" width="3.92" height="1.05" fill="#9cdcfe"/><rect x="17.42" y="19.35" width="0.56" height="1.05" fill="#bbbbbb"/><rect x="18.54" y="19.35" width="13.44" height="1.05" fill="#ce9178"/><rect x="31.98" y="19.35" width="0.56" height="1.05" fill="#bbbbbb"/><rect x="2.30" y="20.62" width="0.56" height="1.05" fill="#bbbbbb"/><rect x="2.30" y="23.16" width="2.24" height="1.05" fill="#c586c0"/><rect x="5.10" y="23.16" width="1.12" height="1.05" fill="#c586c0"/><rect x="6.78" y="23.16" width="0.56" height="1.05" fill="#bbbbbb"/><rect x="7.34" y="23.16" width="3.92" height="1.05" fill="#9cdcfe"/><rect x="11.26" y="23.16" width="0.56" height="1.05" fill="#bbbbbb"/><rect x="11.82" y="23.16" width="1.68" height="1.05" fill="#9cdcfe"/><rect x="13.50" y="23.16" width="0.56" height="1.05" fill="#bbbbbb"/><rect x="14.06" y="23.16" width="4.48" height="1.05" fill="#4fc1ff"/><rect x="19.10" y="23.16" width="1.12" height="1.05" fill="#bbbbbb"/><rect x="20.78" y="23.16" width="6.72" height="1.05" fill="#ce9178"/><rect x="27.50" y="23.16" width="0.56" height="1.05" fill="#bbbbbb"/><rect x="28.62" y="23.16" width="0.56" height="1.05" fill="#bbbbbb"/><rect x="4.54" y="24.43" width="2.80" height="1.05" fill="#9cdcfe"/><rect x="7.34" y="24.43" width="0.56" height="1.05" fill="#bbbbbb"/><rect x="7.90" y="24.43" width="4.48" height="1.05" fill="#9cdcfe"/><rect x="12.38" y="24.43" width="0.56" height="1.05" fill="#bbbbbb"/><rect x="12.94" y="24.43" width="3.92" height="1.05" fill="#9cdcfe"/><rect x="17.42" y="24.43" width="0.56" height="1.05" fill="#bbbbbb"/><rect x="18.54" y="24.43" width="13.44" height="1.05" fill="#ce9178"/><rect x="31.98" y="24.43" width="0.56" height="1.05" fill="#bbbbbb"/><rect x="2.30" y="25.70" width="0.56" height="1.05" fill="#bbbbbb"/><rect x="2.30" y="28.24" width="1.12" height="1.05" fill="#c586c0"/><rect x="3.98" y="28.24" width="1.12" height="1.05" fill="#bbbbbb"/><rect x="5.10" y="28.24" width="2.80" height="1.05" fill="#9cdcfe"/><rect x="7.90" y="28.24" width="0.56" height="1.05" fill="#bbbbbb"/><rect x="8.46" y="28.24" width="4.48" height="1.05" fill="#9cdcfe"/><rect x="12.94" y="28.24" width="0.56" height="1.05" fill="#bbbbbb"/><rect x="13.50" y="28.24" width="3.92" height="1.05" fill="#9cdcfe"/><rect x="17.42" y="28.24" width="0.56" height="1.05" fill="#bbbbbb"/><rect x="17.98" y="28.24" width="4.48" height="1.05" fill="#dcdcaa"/><rect x="22.46" y="28.24" width="0.56" height="1.05" fill="#bbbbbb"/><rect x="23.02" y="28.24" width="1.68" height="1.05" fill="#ce9178"/><rect x="24.70" y="28.24" width="1.12" height="1.05" fill="#bbbbbb"/><rect x="26.38" y="28.24" width="0.56" height="1.05" fill="#bbbbbb"/><rect x="4.54" y="29.51" width="2.80" height="1.05" fill="#9cdcfe"/><rect x="7.34" y="29.51" width="0.56" height="1.05" fill="#bbbbbb"/><rect x="7.90" y="29.51" width="4.48" height="1.05" fill="#9cdcfe"/><rect x="12.38" y="29.51" width="0.56" height="1.05" fill="#bbbbbb"/><rect x="12.94" y="29.51" width="3.92" height="1.05" fill="#9cdcfe"/><rect x="16.86" y="29.51" width="1.12" height="1.05" fill="#bbbbbb"/><rect x="17.98" y="29.51" width="1.68" height="1.05" fill="#ce9178"/><rect x="19.66" y="29.51" width="0.56" height="1.05" fill="#bbbbbb"/><rect x="2.30" y="30.78" width="0.56" height="1.05" fill="#bbbbbb"/><rect x="2.30" y="33.32" width="1.68" height="1.05" fill="#569cd6"/><rect x="4.54" y="33.32" width="5.04" height="1.05" fill="#9cdcfe"/><rect x="10.14" y="33.32" width="0.56" height="1.05" fill="#bbbbbb"/><rect x="11.26" y="33.32" width="2.80" height="1.05" fill="#9cdcfe"/><rect x="14.06" y="33.32" width="0.56" height="1.05" fill="#bbbbbb"/><rect x="14.62" y="33.32" width="4.48" height="1.05" fill="#9cdcfe"/><rect x="19.10" y="33.32" width="0.56" height="1.05" fill="#bbbbbb"/><rect x="19.66" y="33.32" width="3.92" height="1.05" fill="#9cdcfe"/><rect x="23.58" y="33.32" width="0.56" height="1.05" fill="#bbbbbb"/><rect x="2.30" y="34.59" width="2.80" height="1.05" fill="#9cdcfe"/><rect x="5.10" y="34.59" width="0.56" height="1.05" fill="#bbbbbb"/><rect x="5.66" y="34.59" width="6.72" height="1.05" fill="#9cdcfe"/><rect x="12.38" y="34.59" width="0.56" height="1.05" fill="#bbbbbb"/><rect x="12.94" y="34.59" width="3.92" height="1.05" fill="#9cdcfe"/><rect x="16.86" y="34.59" width="0.56" height="1.05" fill="#bbbbbb"/><rect x="17.42" y="34.59" width="1.68" height="1.05" fill="#dcdcaa"/><rect x="19.10" y="34.59" width="1.12" height="1.05" fill="#bbbbbb"/><rect x="20.22" y="34.59" width="3.36" height="1.05" fill="#9cdcfe"/><rect x="23.58" y="34.59" width="0.56" height="1.05" fill="#bbbbbb"/><rect x="24.70" y="34.59" width="1.12" height="1.05" fill="#bbbbbb"/><rect x="26.38" y="34.59" width="0.56" height="1.05" fill="#bbbbbb"/><rect x="4.54" y="35.86" width="3.36" height="1.05" fill="#c586c0"/><rect x="8.46" y="35.86" width="3.36" height="1.05" fill="#9cdcfe"/><rect x="11.82" y="35.86" width="0.56" height="1.05" fill="#bbbbbb"/><rect x="2.30" y="37.13" width="1.12" height="1.05" fill="#bbbbbb"/><rect x="3.98" y="37.13" width="0.56" height="1.05" fill="#bbbbbb"/><rect x="4.54" y="37.13" width="2.80" height="1.05" fill="#9cdcfe"/><rect x="7.34" y="37.13" width="0.56" height="1.05" fill="#bbbbbb"/><rect x="8.46" y="37.13" width="1.12" height="1.05" fill="#bbbbbb"/><rect x="10.14" y="37.13" width="0.56" height="1.05" fill="#bbbbbb"/><rect x="4.54" y="38.40" width="3.36" height="1.05" fill="#c586c0"/><rect x="8.46" y="38.40" width="3.92" height="1.05" fill="#9cdcfe"/><rect x="12.38" y="38.40" width="0.56" height="1.05" fill="#bbbbbb"/><rect x="12.94" y="38.40" width="3.36" height="1.05" fill="#dcdcaa"/><rect x="16.30" y="38.40" width="0.56" height="1.05" fill="#bbbbbb"/><rect x="16.86" y="38.40" width="2.80" height="1.05" fill="#9cdcfe"/><rect x="19.66" y="38.40" width="1.12" height="1.05" fill="#bbbbbb"/><rect x="2.30" y="39.67" width="1.68" height="1.05" fill="#bbbbbb"/><rect x="2.30" y="42.21" width="2.80" height="1.05" fill="#9cdcfe"/><rect x="5.10" y="42.21" width="0.56" height="1.05" fill="#bbbbbb"/><rect x="5.66" y="42.21" width="6.72" height="1.05" fill="#9cdcfe"/><rect x="12.38" y="42.21" width="0.56" height="1.05" fill="#bbbbbb"/><rect x="12.94" y="42.21" width="4.48" height="1.05" fill="#9cdcfe"/><rect x="17.42" y="42.21" width="0.56" height="1.05" fill="#bbbbbb"/><rect x="17.98" y="42.21" width="1.68" height="1.05" fill="#dcdcaa"/><rect x="19.66" y="42.21" width="1.12" height="1.05" fill="#bbbbbb"/><rect x="20.78" y="42.21" width="1.68" height="1.05" fill="#9cdcfe"/><rect x="22.46" y="42.21" width="0.56" height="1.05" fill="#bbbbbb"/><rect x="23.58" y="42.21" width="1.12" height="1.05" fill="#bbbbbb"/><rect x="25.26" y="42.21" width="0.56" height="1.05" fill="#bbbbbb"/><rect x="4.54" y="43.48" width="6.72" height="1.05" fill="#dcdcaa"/><rect x="11.26" y="43.48" width="1.68" height="1.05" fill="#bbbbbb"/><rect x="4.54" y="44.75" width="7.28" height="1.05" fill="#dcdcaa"/><rect x="11.82" y="44.75" width="0.56" height="1.05" fill="#bbbbbb"/><rect x="12.38" y="44.75" width="1.68" height="1.05" fill="#9cdcfe"/><rect x="14.06" y="44.75" width="1.12" height="1.05" fill="#bbbbbb"/><rect x="4.54" y="46.02" width="1.12" height="1.05" fill="#c586c0"/><rect x="6.22" y="46.02" width="0.56" height="1.05" fill="#bbbbbb"/><rect x="6.78" y="46.02" width="1.68" height="1.05" fill="#9cdcfe"/><rect x="8.46" y="46.02" width="0.56" height="1.05" fill="#bbbbbb"/><rect x="9.02" y="46.02" width="3.36" height="1.05" fill="#9cdcfe"/><rect x="12.94" y="46.02" width="1.12" height="1.05" fill="#bbbbbb"/><rect x="14.62" y="46.02" width="1.68" height="1.05" fill="#b5cea8"/><rect x="16.30" y="46.02" width="0.56" height="1.05" fill="#bbbbbb"/><rect x="17.42" y="46.02" width="0.56" height="1.05" fill="#bbbbbb"/><rect x="6.78" y="47.29" width="3.36" height="1.05" fill="#c586c0"/><rect x="10.70" y="47.29" width="3.92" height="1.05" fill="#9cdcfe"/><rect x="14.62" y="47.29" width="0.56" height="1.05" fill="#bbbbbb"/><rect x="15.18" y="47.29" width="3.92" height="1.05" fill="#dcdcaa"/><rect x="19.10" y="47.29" width="0.56" height="1.05" fill="#bbbbbb"/><rect x="19.66" y="47.29" width="1.68" height="1.05" fill="#9cdcfe"/><rect x="21.34" y="47.29" width="1.12" height="1.05" fill="#bbbbbb"/><rect x="4.54" y="48.56" width="0.56" height="1.05" fill="#bbbbbb"/><rect x="4.54" y="49.83" width="3.36" height="1.05" fill="#c586c0"/><rect x="8.46" y="49.83" width="3.92" height="1.05" fill="#9cdcfe"/><rect x="12.38" y="49.83" width="0.56" height="1.05" fill="#bbbbbb"/><rect x="12.94" y="49.83" width="3.36" height="1.05" fill="#dcdcaa"/><rect x="16.30" y="49.83" width="0.56" height="1.05" fill="#bbbbbb"/><rect x="16.86" y="49.83" width="1.68" height="1.05" fill="#9cdcfe"/><rect x="18.54" y="49.83" width="1.12" height="1.05" fill="#bbbbbb"/><rect x="2.30" y="51.10" width="1.12" height="1.05" fill="#bbbbbb"/><rect x="3.98" y="51.10" width="0.56" height="1.05" fill="#bbbbbb"/><rect x="4.54" y="51.10" width="2.80" height="1.05" fill="#9cdcfe"/><rect x="7.34" y="51.10" width="0.56" height="1.05" fill="#bbbbbb"/><rect x="8.46" y="51.10" width="1.12" height="1.05" fill="#bbbbbb"/><rect x="10.14" y="51.10" width="0.56" height="1.05" fill="#bbbbbb"/><rect x="4.54" y="52.37" width="6.72" height="1.05" fill="#dcdcaa"/><rect x="11.26" y="52.37" width="1.68" height="1.05" fill="#bbbbbb"/><rect x="4.54" y="53.64" width="1.68" height="1.05" fill="#569cd6"/><rect x="6.78" y="53.64" width="6.16" height="1.05" fill="#9cdcfe"/><rect x="13.50" y="53.64" width="0.56" height="1.05" fill="#bbbbbb"/><rect x="14.62" y="53.64" width="1.12" height="1.05" fill="#ce9178"/><rect x="15.74" y="53.64" width="0.56" height="1.05" fill="#bbbbbb"/><rect x="4.54" y="54.91" width="1.12" height="1.05" fill="#c586c0"/><rect x="6.22" y="54.91" width="0.56" height="1.05" fill="#bbbbbb"/><rect x="6.78" y="54.91" width="2.80" height="1.05" fill="#9cdcfe"/><rect x="9.58" y="54.91" width="0.56" height="1.05" fill="#bbbbbb"/><rect x="10.14" y="54.91" width="4.48" height="1.05" fill="#9cdcfe"/><rect x="14.62" y="54.91" width="0.56" height="1.05" fill="#bbbbbb"/><rect x="15.74" y="54.91" width="0.56" height="1.05" fill="#bbbbbb"/><rect x="6.78" y="56.18" width="1.12" height="1.05" fill="#c586c0"/><rect x="8.46" y="56.18" width="0.56" height="1.05" fill="#bbbbbb"/><rect x="9.02" y="56.18" width="2.80" height="1.05" fill="#9cdcfe"/><rect x="11.82" y="56.18" width="0.56" height="1.05" fill="#bbbbbb"/><rect x="12.38" y="56.18" width="4.48" height="1.05" fill="#9cdcfe"/><rect x="16.86" y="56.18" width="0.56" height="1.05" fill="#bbbbbb"/><rect x="17.42" y="56.18" width="3.36" height="1.05" fill="#9cdcfe"/><rect x="21.34" y="56.18" width="1.12" height="1.05" fill="#bbbbbb"/><rect x="23.02" y="56.18" width="2.80" height="1.05" fill="#ce9178"/><rect x="25.82" y="56.18" width="0.56" height="1.05" fill="#bbbbbb"/><rect x="26.94" y="56.18" width="0.56" height="1.05" fill="#bbbbbb"/><rect x="9.02" y="57.45" width="1.12" height="1.05" fill="#c586c0"/><rect x="10.70" y="57.45" width="0.56" height="1.05" fill="#bbbbbb"/><rect x="11.26" y="57.45" width="2.80" height="1.05" fill="#9cdcfe"/><rect x="14.06" y="57.45" width="0.56" height="1.05" fill="#bbbbbb"/><rect x="14.62" y="57.45" width="4.48" height="1.05" fill="#9cdcfe"/><rect x="19.10" y="57.45" width="0.56" height="1.05" fill="#bbbbbb"/><rect x="19.66" y="57.45" width="2.24" height="1.05" fill="#9cdcfe"/><rect x="22.46" y="57.45" width="1.12" height="1.05" fill="#bbbbbb"/><rect x="24.14" y="57.45" width="2.80" height="1.05" fill="#9cdcfe"/><rect x="26.94" y="57.45" width="0.56" height="1.05" fill="#bbbbbb"/><rect x="27.50" y="57.45" width="4.48" height="1.05" fill="#9cdcfe"/><rect x="31.98" y="57.45" width="0.56" height="1.05" fill="#bbbbbb"/><rect x="32.54" y="57.45" width="2.24" height="1.05" fill="#9cdcfe"/><rect x="34.78" y="57.45" width="0.56" height="1.05" fill="#bbbbbb"/><rect x="35.34" y="57.45" width="2.24" height="1.05" fill="#9cdcfe"/><rect x="38.14" y="57.45" width="1.12" height="1.05" fill="#bbbbbb"/><rect x="39.82" y="57.45" width="1.68" height="1.05" fill="#b5cea8"/><rect x="41.50" y="57.45" width="0.56" height="1.05" fill="#bbbbbb"/><rect x="42.62" y="57.45" width="0.56" height="1.05" fill="#bbbbbb"/><rect x="11.26" y="58.72" width="1.12" height="1.05" fill="#c586c0"/><rect x="12.94" y="58.72" width="1.12" height="1.05" fill="#bbbbbb"/><rect x="14.06" y="58.72" width="6.72" height="1.05" fill="#9cdcfe"/><rect x="20.78" y="58.72" width="0.56" height="1.05" fill="#bbbbbb"/><rect x="21.34" y="58.72" width="3.92" height="1.05" fill="#dcdcaa"/><rect x="25.26" y="58.72" width="0.56" height="1.05" fill="#bbbbbb"/><rect x="25.82" y="58.72" width="3.36" height="1.05" fill="#ce9178"/><rect x="29.18" y="58.72" width="1.12" height="1.05" fill="#bbbbbb"/><rect x="30.86" y="58.72" width="0.56" height="1.05" fill="#bbbbbb"/><rect x="13.50" y="59.99" width="3.92" height="1.05" fill="#9cdcfe"/><rect x="17.42" y="59.99" width="0.56" height="1.05" fill="#bbbbbb"/><rect x="17.98" y="59.99" width="2.80" height="1.05" fill="#dcdcaa"/><rect x="20.78" y="59.99" width="1.12" height="1.05" fill="#bbbbbb"/><rect x="15.74" y="61.26" width="5.04" height="1.05" fill="#9cdcfe"/><rect x="20.78" y="61.26" width="0.56" height="1.05" fill="#bbbbbb"/><rect x="21.90" y="61.26" width="2.24" height="1.05" fill="#569cd6"/><rect x="24.14" y="61.26" width="0.56" height="1.05" fill="#bbbbbb"/><rect x="15.74" y="62.53" width="3.92" height="1.05" fill="#9cdcfe"/><rect x="19.66" y="62.53" width="0.56" height="1.05" fill="#bbbbbb"/><rect x="20.78" y="62.53" width="9.52" height="1.05" fill="#ce9178"/><rect x="30.30" y="62.53" width="0.56" height="1.05" fill="#bbbbbb"/><rect x="15.74" y="63.80" width="2.24" height="1.05" fill="#9cdcfe"/><rect x="17.98" y="63.80" width="0.56" height="1.05" fill="#bbbbbb"/><rect x="19.10" y="63.80" width="3.92" height="1.05" fill="#ce9178"/><rect x="13.50" y="65.07" width="1.68" height="1.05" fill="#bbbbbb"/><rect x="11.26" y="66.34" width="0.56" height="1.05" fill="#bbbbbb"/><rect x="11.26" y="67.61" width="3.92" height="1.05" fill="#dcdcaa"/><rect x="15.18" y="67.61" width="1.68" height="1.05" fill="#bbbbbb"/><rect x="11.26" y="68.88" width="3.36" height="1.05" fill="#c586c0"/><rect x="14.62" y="68.88" width="0.56" height="1.05" fill="#bbbbbb"/><rect x="9.02" y="70.15" width="0.56" height="1.05" fill="#bbbbbb"/><rect x="6.78" y="71.42" width="0.56" height="1.05" fill="#bbbbbb"/><rect x="6.78" y="72.69" width="1.12" height="1.05" fill="#c586c0"/><rect x="8.46" y="72.69" width="0.56" height="1.05" fill="#bbbbbb"/><rect x="9.02" y="72.69" width="2.80" height="1.05" fill="#9cdcfe"/><rect x="11.82" y="72.69" width="0.56" height="1.05" fill="#bbbbbb"/><rect x="12.38" y="72.69" width="4.48" height="1.05" fill="#9cdcfe"/><rect x="16.86" y="72.69" width="0.56" height="1.05" fill="#bbbbbb"/><rect x="17.42" y="72.69" width="3.36" height="1.05" fill="#9cdcfe"/><rect x="21.34" y="72.69" width="1.12" height="1.05" fill="#bbbbbb"/><rect x="23.02" y="72.69" width="2.80" height="1.05" fill="#ce9178"/><rect x="25.82" y="72.69" width="0.56" height="1.05" fill="#bbbbbb"/><rect x="26.94" y="72.69" width="0.56" height="1.05" fill="#bbbbbb"/><rect x="9.02" y="73.96" width="6.16" height="1.05" fill="#9cdcfe"/><rect x="15.74" y="73.96" width="0.56" height="1.05" fill="#bbbbbb"/><rect x="16.86" y="73.96" width="8.40" height="1.05" fill="#ce9178"/><rect x="25.26" y="73.96" width="0.56" height="1.05" fill="#bbbbbb"/><rect x="6.78" y="75.23" width="0.56" height="1.05" fill="#bbbbbb"/><rect x="6.78" y="76.50" width="2.24" height="1.05" fill="#c586c0"/><rect x="9.58" y="76.50" width="1.12" height="1.05" fill="#c586c0"/><rect x="11.26" y="76.50" width="0.56" height="1.05" fill="#bbbbbb"/><rect x="11.82" y="76.50" width="2.80" height="1.05" fill="#9cdcfe"/><rect x="14.62" y="76.50" width="0.56" height="1.05" fill="#bbbbbb"/><rect x="15.18" y="76.50" width="4.48" height="1.05" fill="#9cdcfe"/><rect x="19.66" y="76.50" width="0.56" height="1.05" fill="#bbbbbb"/><rect x="20.22" y="76.50" width="2.24" height="1.05" fill="#9cdcfe"/><rect x="23.02" y="76.50" width="1.12" height="1.05" fill="#bbbbbb"/><rect x="24.70" y="76.50" width="2.80" height="1.05" fill="#9cdcfe"/><rect x="27.50" y="76.50" width="0.56" height="1.05" fill="#bbbbbb"/><rect x="28.06" y="76.50" width="4.48" height="1.05" fill="#9cdcfe"/><rect x="32.54" y="76.50" width="0.56" height="1.05" fill="#bbbbbb"/><rect x="33.10" y="76.50" width="2.24" height="1.05" fill="#9cdcfe"/><rect x="35.34" y="76.50" width="0.56" height="1.05" fill="#bbbbbb"/><rect x="35.90" y="76.50" width="3.92" height="1.05" fill="#9cdcfe"/><rect x="39.82" y="76.50" width="0.56" height="1.05" fill="#bbbbbb"/><rect x="40.94" y="76.50" width="0.56" height="1.05" fill="#bbbbbb"/><rect x="9.02" y="77.77" width="6.16" height="1.05" fill="#9cdcfe"/><rect x="15.74" y="77.77" width="0.56" height="1.05" fill="#bbbbbb"/><rect x="16.86" y="77.77" width="2.80" height="1.05" fill="#9cdcfe"/><rect x="19.66" y="77.77" width="0.56" height="1.05" fill="#bbbbbb"/><rect x="20.22" y="77.77" width="4.48" height="1.05" fill="#9cdcfe"/><rect x="24.70" y="77.77" width="0.56" height="1.05" fill="#bbbbbb"/><rect x="25.26" y="77.77" width="2.24" height="1.05" fill="#9cdcfe"/><rect x="27.50" y="77.77" width="0.56" height="1.05" fill="#bbbbbb"/><rect x="28.06" y="77.77" width="3.92" height="1.05" fill="#9cdcfe"/><rect x="31.98" y="77.77" width="0.56" height="1.05" fill="#bbbbbb"/><rect x="6.78" y="79.04" width="0.56" height="1.05" fill="#bbbbbb"/><rect x="4.54" y="80.31" width="0.56" height="1.05" fill="#bbbbbb"/><rect x="4.54" y="81.58" width="2.24" height="1.05" fill="#c586c0"/><rect x="7.34" y="81.58" width="0.56" height="1.05" fill="#bbbbbb"/><rect x="6.78" y="82.85" width="6.16" height="1.05" fill="#9cdcfe"/><rect x="13.50" y="82.85" width="0.56" height="1.05" fill="#bbbbbb"/><rect x="14.62" y="82.85" width="6.72" height="1.05" fill="#ce9178"/><rect x="4.54" y="84.12" width="0.56" height="1.05" fill="#bbbbbb"/><rect x="4.54" y="85.39" width="4.48" height="1.05" fill="#dcdcaa"/><rect x="9.02" y="85.39" width="0.56" height="1.05" fill="#bbbbbb"/><rect x="9.58" y="85.39" width="6.16" height="1.05" fill="#9cdcfe"/><rect x="15.74" y="85.39" width="1.12" height="1.05" fill="#bbbbbb"/><rect x="4.54" y="86.66" width="3.36" height="1.05" fill="#c586c0"/><rect x="8.46" y="86.66" width="3.92" height="1.05" fill="#9cdcfe"/><rect x="12.38" y="86.66" width="0.56" height="1.05" fill="#bbbbbb"/><rect x="12.94" y="86.66" width="3.36" height="1.05" fill="#dcdcaa"/><rect x="16.30" y="86.66" width="0.56" height="1.05" fill="#bbbbbb"/><rect x="16.86" y="86.66" width="2.80" height="1.05" fill="#9cdcfe"/><rect x="19.66" y="86.66" width="0.56" height="1.05" fill="#bbbbbb"/><rect x="20.22" y="86.66" width="4.48" height="1.05" fill="#9cdcfe"/><rect x="25.26" y="86.66" width="1.12" height="1.05" fill="#bbbbbb"/><rect x="26.94" y="86.66" width="2.24" height="1.05" fill="#bbbbbb"/><rect x="2.30" y="87.93" width="1.68" height="1.05" fill="#bbbbbb"/><rect x="2.30" y="89.20" width="4.48" height="1.05" fill="#569cd6"/><rect x="7.34" y="89.20" width="6.72" height="1.05" fill="#dcdcaa"/><rect x="14.06" y="89.20" width="1.12" height="1.05" fill="#bbbbbb"/><rect x="15.74" y="89.20" width="0.56" height="1.05" fill="#bbbbbb"/><rect x="4.54" y="90.47" width="1.12" height="1.05" fill="#c586c0"/><rect x="6.22" y="90.47" width="0.56" height="1.05" fill="#bbbbbb"/><rect x="6.78" y="90.47" width="8.40" height="1.05" fill="#9cdcfe"/><rect x="15.18" y="90.47" width="0.56" height="1.05" fill="#bbbbbb"/><rect x="16.30" y="90.47" width="0.56" height="1.05" fill="#bbbbbb"/><rect x="6.78" y="91.74" width="8.40" height="1.05" fill="#9cdcfe"/><rect x="15.18" y="91.74" width="0.56" height="1.05" fill="#bbbbbb"/><rect x="15.74" y="91.74" width="2.80" height="1.05" fill="#dcdcaa"/><rect x="18.54" y="91.74" width="1.68" height="1.05" fill="#bbbbbb"/><rect x="4.54" y="93.01" width="0.56" height="1.05" fill="#bbbbbb"/><rect x="4.54" y="94.28" width="1.12" height="1.05" fill="#c586c0"/><rect x="6.22" y="94.28" width="0.56" height="1.05" fill="#bbbbbb"/><rect x="6.78" y="94.28" width="7.28" height="1.05" fill="#9cdcfe"/><rect x="14.06" y="94.28" width="0.56" height="1.05" fill="#bbbbbb"/><rect x="15.18" y="94.28" width="0.56" height="1.05" fill="#bbbbbb"/><rect x="6.78" y="95.55" width="7.28" height="1.05" fill="#9cdcfe"/><rect x="14.62" y="95.55" width="0.56" height="1.05" fill="#bbbbbb"/><rect x="15.74" y="95.55" width="2.80" height="1.05" fill="#569cd6"/><rect x="18.54" y="95.55" width="0.56" height="1.05" fill="#bbbbbb"/><rect x="6.78" y="96.82" width="1.12" height="1.05" fill="#c586c0"/><rect x="8.46" y="96.82" width="0.56" height="1.05" fill="#bbbbbb"/><rect x="9.02" y="96.82" width="8.40" height="1.05" fill="#9cdcfe"/><rect x="17.42" y="96.82" width="0.56" height="1.05" fill="#bbbbbb"/><rect x="18.54" y="96.82" width="0.56" height="1.05" fill="#bbbbbb"/><rect x="9.02" y="98.09" width="8.40" height="1.05" fill="#9cdcfe"/><rect x="17.42" y="98.09" width="0.56" height="1.05" fill="#bbbbbb"/><rect x="17.98" y="98.09" width="2.80" height="1.05" fill="#dcdcaa"/><rect x="20.78" y="98.09" width="1.68" height="1.05" fill="#bbbbbb"/><rect x="6.78" y="99.36" width="0.56" height="1.05" fill="#bbbbbb"/><rect x="4.54" y="100.63" width="0.56" height="1.05" fill="#bbbbbb"/><rect x="2.30" y="103.17" width="0.56" height="1.05" fill="#bbbbbb"/><rect x="2.30" y="104.44" width="4.48" height="1.05" fill="#569cd6"/><rect x="7.34" y="104.44" width="7.28" height="1.05" fill="#dcdcaa"/><rect x="14.62" y="104.44" width="0.56" height="1.05" fill="#bbbbbb"/><rect x="15.18" y="104.44" width="1.68" height="1.05" fill="#9cdcfe"/><rect x="16.86" y="104.44" width="0.56" height="1.05" fill="#bbbbbb"/><rect x="17.98" y="104.44" width="0.56" height="1.05" fill="#bbbbbb"/><rect x="4.54" y="105.71" width="8.40" height="1.05" fill="#6a9955"/><rect x="4.54" y="106.98" width="1.12" height="1.05" fill="#c586c0"/><rect x="6.22" y="106.98" width="1.12" height="1.05" fill="#bbbbbb"/><rect x="7.34" y="106.98" width="1.68" height="1.05" fill="#9cdcfe"/><rect x="9.02" y="106.98" width="0.56" height="1.05" fill="#bbbbbb"/><rect x="9.58" y="106.98" width="3.92" height="1.05" fill="#9cdcfe"/><rect x="13.50" y="106.98" width="0.56" height="1.05" fill="#bbbbbb"/><rect x="14.62" y="106.98" width="0.56" height="1.05" fill="#bbbbbb"/><rect x="6.78" y="108.25" width="1.12" height="1.05" fill="#c586c0"/><rect x="8.46" y="108.25" width="0.56" height="1.05" fill="#bbbbbb"/><rect x="9.02" y="108.25" width="1.68" height="1.05" fill="#9cdcfe"/><rect x="10.70" y="108.25" width="0.56" height="1.05" fill="#bbbbbb"/><rect x="11.26" y="108.25" width="9.52" height="1.05" fill="#dcdcaa"/><rect x="20.78" y="108.25" width="0.56" height="1.05" fill="#bbbbbb"/><rect x="21.34" y="108.25" width="5.04" height="1.05" fill="#ce9178"/><rect x="26.38" y="108.25" width="0.56" height="1.05" fill="#bbbbbb"/><rect x="27.50" y="108.25" width="1.12" height="1.05" fill="#bbbbbb"/><rect x="29.18" y="108.25" width="1.68" height="1.05" fill="#ce9178"/><rect x="30.86" y="108.25" width="0.56" height="1.05" fill="#bbbbbb"/><rect x="31.98" y="108.25" width="0.56" height="1.05" fill="#bbbbbb"/><rect x="9.02" y="109.52" width="6.72" height="1.05" fill="#dcdcaa"/><rect x="15.74" y="109.52" width="1.68" height="1.05" fill="#bbbbbb"/><rect x="6.78" y="110.79" width="0.56" height="1.05" fill="#bbbbbb"/><rect x="4.54" y="112.06" width="0.56" height="1.05" fill="#bbbbbb"/><rect x="4.54" y="113.33" width="2.24" height="1.05" fill="#c586c0"/><rect x="7.34" y="113.33" width="1.12" height="1.05" fill="#c586c0"/><rect x="9.02" y="113.33" width="0.56" height="1.05" fill="#bbbbbb"/><rect x="9.58" y="113.33" width="1.68" height="1.05" fill="#9cdcfe"/><rect x="11.26" y="113.33" width="0.56" height="1.05" fill="#bbbbbb"/><rect x="11.82" y="113.33" width="3.92" height="1.05" fill="#9cdcfe"/><rect x="15.74" y="113.33" width="0.56" height="1.05" fill="#bbbbbb"/><rect x="16.30" y="113.33" width="3.92" height="1.05" fill="#9cdcfe"/><rect x="20.78" y="113.33" width="1.12" height="1.05" fill="#bbbbbb"/><rect x="22.46" y="113.33" width="1.68" height="1.05" fill="#ce9178"/><rect x="24.14" y="113.33" width="0.56" height="1.05" fill="#bbbbbb"/><rect x="25.26" y="113.33" width="0.56" height="1.05" fill="#bbbbbb"/><rect x="6.78" y="114.60" width="6.72" height="1.05" fill="#dcdcaa"/><rect x="13.50" y="114.60" width="1.68" height="1.05" fill="#bbbbbb"/><rect x="4.54" y="115.87" width="0.56" height="1.05" fill="#bbbbbb"/><rect x="2.30" y="117.14" width="0.56" height="1.05" fill="#bbbbbb"/><rect x="2.30" y="119.68" width="2.80" height="1.05" fill="#569cd6"/><rect x="5.66" y="119.68" width="7.84" height="1.05" fill="#9cdcfe"/><rect x="14.06" y="119.68" width="0.56" height="1.05" fill="#bbbbbb"/><rect x="15.18" y="119.68" width="8.40" height="1.05" fill="#ce9178"/><rect x="23.58" y="119.68" width="0.56" height="1.05" fill="#bbbbbb"/><rect x="2.30" y="122.22" width="4.48" height="1.05" fill="#569cd6"/><rect x="7.34" y="122.22" width="6.16" height="1.05" fill="#dcdcaa"/><rect x="13.50" y="122.22" width="0.56" height="1.05" fill="#bbbbbb"/><rect x="14.06" y="122.22" width="3.92" height="1.05" fill="#9cdcfe"/><rect x="17.98" y="122.22" width="0.56" height="1.05" fill="#bbbbbb"/><rect x="19.10" y="122.22" width="0.56" height="1.05" fill="#bbbbbb"/><rect x="4.54" y="123.49" width="1.12" height="1.05" fill="#c586c0"/><rect x="6.22" y="123.49" width="1.12" height="1.05" fill="#bbbbbb"/><rect x="7.34" y="123.49" width="3.92" height="1.05" fill="#9cdcfe"/><rect x="11.82" y="123.49" width="1.12" height="1.05" fill="#bbbbbb"/><rect x="13.50" y="123.49" width="7.28" height="1.05" fill="#9cdcfe"/><rect x="20.78" y="123.49" width="0.56" height="1.05" fill="#bbbbbb"/><rect x="21.90" y="123.49" width="0.56" height="1.05" fill="#bbbbbb"/><rect x="6.78" y="124.76" width="3.36" height="1.05" fill="#c586c0"/><rect x="10.14" y="124.76" width="0.56" height="1.05" fill="#bbbbbb"/><rect x="4.54" y="126.03" width="0.56" height="1.05" fill="#bbbbbb"/><rect x="4.54" y="127.30" width="8.40" height="1.05" fill="#9cdcfe"/><rect x="13.50" y="127.30" width="0.56" height="1.05" fill="#bbbbbb"/><rect x="14.62" y="127.30" width="3.92" height="1.05" fill="#9cdcfe"/><rect x="18.54" y="127.30" width="0.56" height="1.05" fill="#bbbbbb"/><rect x="19.10" y="127.30" width="3.92" height="1.05" fill="#dcdcaa"/><rect x="23.02" y="127.30" width="1.12" height="1.05" fill="#bbbbbb"/><rect x="6.78" y="128.57" width="2.24" height="1.05" fill="#9cdcfe"/><rect x="9.02" y="128.57" width="0.56" height="1.05" fill="#bbbbbb"/><rect x="10.14" y="128.57" width="2.24" height="1.05" fill="#569cd6"/><rect x="12.38" y="128.57" width="0.56" height="1.05" fill="#bbbbbb"/><rect x="6.78" y="129.84" width="2.24" height="1.05" fill="#9cdcfe"/><rect x="9.02" y="129.84" width="0.56" height="1.05" fill="#bbbbbb"/><rect x="10.14" y="129.84" width="5.04" height="1.05" fill="#ce9178"/><rect x="15.18" y="129.84" width="0.56" height="1.05" fill="#bbbbbb"/><rect x="6.78" y="131.11" width="6.16" height="1.05" fill="#9cdcfe"/><rect x="12.94" y="131.11" width="0.56" height="1.05" fill="#bbbbbb"/><rect x="14.06" y="131.11" width="7.84" height="1.05" fill="#ce9178"/><rect x="21.90" y="131.11" width="0.56" height="1.05" fill="#bbbbbb"/><rect x="6.78" y="132.38" width="5.60" height="1.05" fill="#9cdcfe"/><rect x="12.38" y="132.38" width="0.56" height="1.05" fill="#bbbbbb"/><rect x="13.50" y="132.38" width="3.36" height="1.05" fill="#569cd6"/><rect x="17.42" y="132.38" width="3.92" height="1.05" fill="#9cdcfe"/><rect x="21.90" y="132.38" width="1.12" height="1.05" fill="#bbbbbb"/><rect x="23.58" y="132.38" width="4.48" height="1.05" fill="#ce9178"/><rect x="28.62" y="132.38" width="0.56" height="1.05" fill="#bbbbbb"/><rect x="29.74" y="132.38" width="3.92" height="1.05" fill="#9cdcfe"/><rect x="34.22" y="132.38" width="0.56" height="1.05" fill="#bbbbbb"/><rect x="35.34" y="132.38" width="13.44" height="1.05" fill="#ce9178"/><rect x="4.54" y="133.65" width="1.68" height="1.05" fill="#bbbbbb"/><rect x="2.30" y="134.92" width="0.56" height="1.05" fill="#bbbbbb"/><rect x="2.30" y="137.46" width="4.48" height="1.05" fill="#569cd6"/><rect x="7.34" y="137.46" width="4.48" height="1.05" fill="#dcdcaa"/><rect x="11.82" y="137.46" width="1.12" height="1.05" fill="#bbbbbb"/><rect x="13.50" y="137.46" width="0.56" height="1.05" fill="#bbbbbb"/><rect x="4.54" y="138.73" width="3.36" height="1.05" fill="#c586c0"/><rect x="8.46" y="138.73" width="2.80" height="1.05" fill="#9cdcfe"/><rect x="11.26" y="138.73" width="0.56" height="1.05" fill="#bbbbbb"/><rect x="11.82" y="138.73" width="3.92" height="1.05" fill="#9cdcfe"/><rect x="15.74" y="138.73" width="0.56" height="1.05" fill="#bbbbbb"/><rect x="16.30" y="138.73" width="4.48" height="1.05" fill="#dcdcaa"/><rect x="20.78" y="138.73" width="1.68" height="1.05" fill="#bbbbbb"/><rect x="2.30" y="140.00" width="0.56" height="1.05" fill="#bbbbbb"/><rect x="2.30" y="142.54" width="1.12" height="1.05" fill="#bbbbbb"/><rect x="3.42" y="143.81" width="1.68" height="1.05" fill="#9cdcfe"/><rect x="3.42" y="145.08" width="3.36" height="1.05" fill="#9cdcfe"/><rect x="7.34" y="145.08" width="12.88" height="1.05" fill="#9cdcfe"/><rect x="20.78" y="145.08" width="0.56" height="1.05" fill="#bbbbbb"/><rect x="21.34" y="145.08" width="2.24" height="1.05" fill="#9cdcfe"/><rect x="23.58" y="145.08" width="0.56" height="1.05" fill="#bbbbbb"/><rect x="24.14" y="145.08" width="1.68" height="1.05" fill="#b5cea8"/><rect x="25.82" y="145.08" width="0.56" height="1.05" fill="#bbbbbb"/><rect x="26.38" y="145.08" width="3.36" height="1.05" fill="#9cdcfe"/><rect x="29.74" y="145.08" width="1.12" height="1.05" fill="#bbbbbb"/><rect x="30.86" y="145.08" width="1.68" height="1.05" fill="#ce9178"/><rect x="32.54" y="145.08" width="0.56" height="1.05" fill="#bbbbbb"/><rect x="33.10" y="145.08" width="1.68" height="1.05" fill="#ce9178"/><rect x="34.78" y="145.08" width="0.56" height="1.05" fill="#bbbbbb"/><rect x="35.34" y="145.08" width="1.68" height="1.05" fill="#ce9178"/><rect x="37.02" y="145.08" width="1.12" height="1.05" fill="#bbbbbb"/><rect x="3.42" y="146.35" width="3.92" height="1.05" fill="#9cdcfe"/><rect x="7.90" y="146.35" width="10.08" height="1.05" fill="#9cdcfe"/><rect x="18.54" y="146.35" width="2.24" height="1.05" fill="#569cd6"/><rect x="20.78" y="146.35" width="0.56" height="1.05" fill="#bbbbbb"/><rect x="21.34" y="146.35" width="2.80" height="1.05" fill="#569cd6"/><rect x="24.70" y="146.35" width="2.80" height="1.05" fill="#9cdcfe"/><rect x="3.42" y="147.62" width="3.36" height="1.05" fill="#9cdcfe"/><rect x="7.34" y="147.62" width="7.28" height="1.05" fill="#9cdcfe"/><rect x="15.18" y="147.62" width="0.56" height="1.05" fill="#bbbbbb"/><rect x="15.74" y="147.62" width="3.92" height="1.05" fill="#9cdcfe"/><rect x="19.66" y="147.62" width="0.56" height="1.05" fill="#bbbbbb"/><rect x="20.22" y="147.62" width="2.24" height="1.05" fill="#b5cea8"/><rect x="22.46" y="147.62" width="0.56" height="1.05" fill="#bbbbbb"/><rect x="23.02" y="147.62" width="3.92" height="1.05" fill="#9cdcfe"/><rect x="26.94" y="147.62" width="1.12" height="1.05" fill="#bbbbbb"/><rect x="28.06" y="147.62" width="2.80" height="1.05" fill="#9cdcfe"/><rect x="30.86" y="147.62" width="0.56" height="1.05" fill="#bbbbbb"/><rect x="31.42" y="147.62" width="1.68" height="1.05" fill="#b5cea8"/><rect x="33.10" y="147.62" width="1.12" height="1.05" fill="#bbbbbb"/><rect x="2.30" y="148.89" width="1.12" height="1.05" fill="#bbbbbb"/><rect x="2.30" y="150.16" width="4.48" height="1.05" fill="#569cd6"/><rect x="7.34" y="150.16" width="2.24" height="1.05" fill="#dcdcaa"/><rect x="9.58" y="150.16" width="0.56" height="1.05" fill="#bbbbbb"/><rect x="10.14" y="150.16" width="1.68" height="1.05" fill="#9cdcfe"/><rect x="11.82" y="150.16" width="0.56" height="1.05" fill="#bbbbbb"/><rect x="12.94" y="150.16" width="3.36" height="1.05" fill="#9cdcfe"/><rect x="16.30" y="150.16" width="0.56" height="1.05" fill="#bbbbbb"/><rect x="17.42" y="150.16" width="3.92" height="1.05" fill="#9cdcfe"/><rect x="21.34" y="150.16" width="0.56" height="1.05" fill="#bbbbbb"/><rect x="22.46" y="150.16" width="3.36" height="1.05" fill="#9cdcfe"/><rect x="25.82" y="150.16" width="0.56" height="1.05" fill="#bbbbbb"/><rect x="26.94" y="150.16" width="0.56" height="1.05" fill="#bbbbbb"/><rect x="4.54" y="151.43" width="6.16" height="1.05" fill="#dcdcaa"/><rect x="10.70" y="151.43" width="0.56" height="1.05" fill="#bbbbbb"/><rect x="11.26" y="151.43" width="3.92" height="1.05" fill="#9cdcfe"/><rect x="15.18" y="151.43" width="1.12" height="1.05" fill="#bbbbbb"/><rect x="4.54" y="152.70" width="2.80" height="1.05" fill="#9cdcfe"/><rect x="7.34" y="152.70" width="0.56" height="1.05" fill="#bbbbbb"/><rect x="7.90" y="152.70" width="4.48" height="1.05" fill="#9cdcfe"/><rect x="12.38" y="152.70" width="0.56" height="1.05" fill="#bbbbbb"/><rect x="12.94" y="152.70" width="3.92" height="1.05" fill="#9cdcfe"/><rect x="16.86" y="152.70" width="0.56" height="1.05" fill="#bbbbbb"/><rect x="17.42" y="152.70" width="7.84" height="1.05" fill="#9cdcfe"/><rect x="25.26" y="152.70" width="0.56" height="1.05" fill="#bbbbbb"/><rect x="26.38" y="152.70" width="0.56" height="1.05" fill="#bbbbbb"/><rect x="27.50" y="152.70" width="4.48" height="1.05" fill="#dcdcaa"/><rect x="31.98" y="152.70" width="1.68" height="1.05" fill="#bbbbbb"/><rect x="4.54" y="153.97" width="3.36" height="1.05" fill="#c586c0"/><rect x="8.46" y="153.97" width="1.68" height="1.05" fill="#569cd6"/><rect x="10.70" y="153.97" width="3.92" height="1.05" fill="#dcdcaa"/><rect x="14.62" y="153.97" width="1.12" height="1.05" fill="#bbbbbb"/><rect x="15.74" y="153.97" width="3.92" height="1.05" fill="#9cdcfe"/><rect x="19.66" y="153.97" width="0.56" height="1.05" fill="#bbbbbb"/><rect x="20.78" y="153.97" width="3.36" height="1.05" fill="#9cdcfe"/><rect x="24.14" y="153.97" width="0.56" height="1.05" fill="#bbbbbb"/><rect x="25.26" y="153.97" width="1.12" height="1.05" fill="#bbbbbb"/><rect x="26.94" y="153.97" width="0.56" height="1.05" fill="#bbbbbb"/><rect x="6.78" y="155.24" width="2.80" height="1.05" fill="#9cdcfe"/><rect x="9.58" y="155.24" width="0.56" height="1.05" fill="#bbbbbb"/><rect x="10.14" y="155.24" width="2.24" height="1.05" fill="#dcdcaa"/><rect x="12.38" y="155.24" width="0.56" height="1.05" fill="#bbbbbb"/><rect x="12.94" y="155.24" width="1.68" height="1.05" fill="#9cdcfe"/><rect x="14.62" y="155.24" width="0.56" height="1.05" fill="#bbbbbb"/><rect x="15.74" y="155.24" width="3.36" height="1.05" fill="#9cdcfe"/><rect x="19.10" y="155.24" width="0.56" height="1.05" fill="#bbbbbb"/><rect x="20.22" y="155.24" width="3.36" height="1.05" fill="#9cdcfe"/><rect x="23.58" y="155.24" width="0.56" height="1.05" fill="#bbbbbb"/><rect x="9.02" y="156.51" width="0.56" height="1.05" fill="#bbbbbb"/><rect x="9.58" y="156.51" width="2.24" height="1.05" fill="#dcdcaa"/><rect x="11.82" y="156.51" width="0.56" height="1.05" fill="#bbbbbb"/><rect x="12.38" y="156.51" width="4.48" height="1.05" fill="#9cdcfe"/><rect x="17.42" y="156.51" width="1.12" height="1.05" fill="#bbbbbb"/><rect x="19.10" y="156.51" width="0.56" height="1.05" fill="#bbbbbb"/><rect x="11.26" y="157.78" width="3.92" height="1.05" fill="#dcdcaa"/><rect x="15.18" y="157.78" width="0.56" height="1.05" fill="#bbbbbb"/><rect x="15.74" y="157.78" width="4.48" height="1.05" fill="#9cdcfe"/><rect x="20.22" y="157.78" width="0.56" height="1.05" fill="#bbbbbb"/><rect x="20.78" y="157.78" width="2.24" height="1.05" fill="#9cdcfe"/><rect x="23.02" y="157.78" width="1.12" height="1.05" fill="#bbbbbb"/><rect x="9.02" y="159.05" width="1.12" height="1.05" fill="#bbbbbb"/><rect x="10.70" y="159.05" width="1.68" height="1.05" fill="#9cdcfe"/><rect x="12.94" y="159.05" width="1.12" height="1.05" fill="#bbbbbb"/><rect x="14.62" y="159.05" width="0.56" height="1.05" fill="#bbbbbb"/><rect x="11.26" y="160.32" width="3.36" height="1.05" fill="#dcdcaa"/><rect x="14.62" y="160.32" width="0.56" height="1.05" fill="#bbbbbb"/><rect x="15.18" y="160.32" width="1.68" height="1.05" fill="#9cdcfe"/><rect x="17.42" y="160.32" width="1.12" height="1.05" fill="#bbbbbb"/><rect x="19.10" y="160.32" width="1.68" height="1.05" fill="#9cdcfe"/><rect x="20.78" y="160.32" width="0.56" height="1.05" fill="#bbbbbb"/><rect x="21.34" y="160.32" width="2.24" height="1.05" fill="#9cdcfe"/><rect x="24.14" y="160.32" width="1.12" height="1.05" fill="#bbbbbb"/><rect x="25.82" y="160.32" width="1.68" height="1.05" fill="#9cdcfe"/><rect x="27.50" y="160.32" width="0.56" height="1.05" fill="#bbbbbb"/><rect x="28.06" y="160.32" width="2.24" height="1.05" fill="#9cdcfe"/><rect x="30.30" y="160.32" width="0.56" height="1.05" fill="#bbbbbb"/><rect x="30.86" y="160.32" width="3.92" height="1.05" fill="#9cdcfe"/><rect x="35.34" y="160.32" width="0.56" height="1.05" fill="#bbbbbb"/><rect x="36.46" y="160.32" width="1.68" height="1.05" fill="#9cdcfe"/><rect x="38.14" y="160.32" width="0.56" height="1.05" fill="#bbbbbb"/><rect x="38.70" y="160.32" width="2.24" height="1.05" fill="#9cdcfe"/><rect x="40.94" y="160.32" width="0.56" height="1.05" fill="#bbbbbb"/><rect x="41.50" y="160.32" width="3.92" height="1.05" fill="#9cdcfe"/><rect x="45.98" y="160.32" width="0.56" height="1.05" fill="#bbbbbb"/><rect x="47.10" y="160.32" width="5.60" height="1.05" fill="#ce9178"/><rect x="52.70" y="160.32" width="1.12" height="1.05" fill="#bbbbbb"/><rect x="9.02" y="161.59" width="1.12" height="1.05" fill="#bbbbbb"/><rect x="9.02" y="162.86" width="0.56" height="1.05" fill="#bbbbbb"/><rect x="9.58" y="162.86" width="2.80" height="1.05" fill="#c586c0"/><rect x="12.38" y="162.86" width="1.12" height="1.05" fill="#bbbbbb"/><rect x="13.50" y="162.86" width="2.80" height="1.05" fill="#9cdcfe"/><rect x="16.30" y="162.86" width="0.56" height="1.05" fill="#bbbbbb"/><rect x="17.42" y="162.86" width="1.12" height="1.05" fill="#bbbbbb"/><rect x="19.10" y="162.86" width="0.56" height="1.05" fill="#bbbbbb"/><rect x="11.26" y="164.13" width="3.36" height="1.05" fill="#dcdcaa"/><rect x="14.62" y="164.13" width="0.56" height="1.05" fill="#bbbbbb"/><rect x="15.18" y="164.13" width="2.80" height="1.05" fill="#9cdcfe"/><rect x="17.98" y="164.13" width="0.56" height="1.05" fill="#bbbbbb"/><rect x="9.02" y="165.40" width="1.12" height="1.05" fill="#bbbbbb"/><rect x="4.54" y="166.67" width="1.12" height="1.05" fill="#bbbbbb"/><rect x="2.30" y="167.94" width="0.56" height="1.05" fill="#bbbbbb"/><rect x="2.30" y="170.48" width="36.40" height="1.05" fill="#6a9955"/><rect x="2.30" y="171.75" width="4.48" height="1.05" fill="#569cd6"/><rect x="7.34" y="171.75" width="1.68" height="1.05" fill="#dcdcaa"/><rect x="9.02" y="171.75" width="0.56" height="1.05" fill="#bbbbbb"/><rect x="9.58" y="171.75" width="1.68" height="1.05" fill="#9cdcfe"/><rect x="11.26" y="171.75" width="0.56" height="1.05" fill="#bbbbbb"/><rect x="12.38" y="171.75" width="2.80" height="1.05" fill="#9cdcfe"/><rect x="15.18" y="171.75" width="0.56" height="1.05" fill="#bbbbbb"/><rect x="16.30" y="171.75" width="3.92" height="1.05" fill="#9cdcfe"/><rect x="20.22" y="171.75" width="0.56" height="1.05" fill="#bbbbbb"/><rect x="21.34" y="171.75" width="3.36" height="1.05" fill="#9cdcfe"/><rect x="24.70" y="171.75" width="0.56" height="1.05" fill="#bbbbbb"/><rect x="25.82" y="171.75" width="0.56" height="1.05" fill="#bbbbbb"/><rect x="4.54" y="173.02" width="6.16" height="1.05" fill="#dcdcaa"/><rect x="10.70" y="173.02" width="0.56" height="1.05" fill="#bbbbbb"/><rect x="11.26" y="173.02" width="3.92" height="1.05" fill="#9cdcfe"/><rect x="15.18" y="173.02" width="1.12" height="1.05" fill="#bbbbbb"/><rect x="4.54" y="174.29" width="2.80" height="1.05" fill="#9cdcfe"/><rect x="7.34" y="174.29" width="0.56" height="1.05" fill="#bbbbbb"/><rect x="7.90" y="174.29" width="4.48" height="1.05" fill="#9cdcfe"/><rect x="12.38" y="174.29" width="0.56" height="1.05" fill="#bbbbbb"/><rect x="12.94" y="174.29" width="3.92" height="1.05" fill="#9cdcfe"/><rect x="16.86" y="174.29" width="0.56" height="1.05" fill="#bbbbbb"/><rect x="17.42" y="174.29" width="7.84" height="1.05" fill="#9cdcfe"/><rect x="25.26" y="174.29" width="0.56" height="1.05" fill="#bbbbbb"/><rect x="26.38" y="174.29" width="0.56" height="1.05" fill="#bbbbbb"/><rect x="27.50" y="174.29" width="4.48" height="1.05" fill="#dcdcaa"/><rect x="31.98" y="174.29" width="1.68" height="1.05" fill="#bbbbbb"/><rect x="4.54" y="175.56" width="3.36" height="1.05" fill="#c586c0"/><rect x="8.46" y="175.56" width="1.68" height="1.05" fill="#569cd6"/><rect x="10.70" y="175.56" width="3.92" height="1.05" fill="#dcdcaa"/><rect x="14.62" y="175.56" width="1.12" height="1.05" fill="#bbbbbb"/><rect x="15.74" y="175.56" width="3.92" height="1.05" fill="#9cdcfe"/><rect x="19.66" y="175.56" width="0.56" height="1.05" fill="#bbbbbb"/><rect x="20.78" y="175.56" width="3.36" height="1.05" fill="#9cdcfe"/><rect x="24.14" y="175.56" width="0.56" height="1.05" fill="#bbbbbb"/><rect x="25.26" y="175.56" width="1.12" height="1.05" fill="#bbbbbb"/><rect x="26.94" y="175.56" width="0.56" height="1.05" fill="#bbbbbb"/><rect x="6.78" y="176.83" width="2.80" height="1.05" fill="#9cdcfe"/><rect x="9.58" y="176.83" width="0.56" height="1.05" fill="#bbbbbb"/><rect x="10.14" y="176.83" width="1.68" height="1.05" fill="#dcdcaa"/><rect x="11.82" y="176.83" width="0.56" height="1.05" fill="#bbbbbb"/><rect x="12.38" y="176.83" width="1.68" height="1.05" fill="#9cdcfe"/><rect x="14.06" y="176.83" width="0.56" height="1.05" fill="#bbbbbb"/><rect x="15.18" y="176.83" width="3.36" height="1.05" fill="#9cdcfe"/><rect x="18.54" y="176.83" width="0.56" height="1.05" fill="#bbbbbb"/><rect x="9.02" y="178.10" width="0.56" height="1.05" fill="#bbbbbb"/><rect x="9.58" y="178.10" width="2.24" height="1.05" fill="#dcdcaa"/><rect x="11.82" y="178.10" width="0.56" height="1.05" fill="#bbbbbb"/><rect x="12.38" y="178.10" width="4.48" height="1.05" fill="#9cdcfe"/><rect x="17.42" y="178.10" width="1.12" height="1.05" fill="#bbbbbb"/><rect x="19.10" y="178.10" width="0.56" height="1.05" fill="#bbbbbb"/><rect x="11.26" y="179.37" width="3.92" height="1.05" fill="#dcdcaa"/><rect x="15.18" y="179.37" width="0.56" height="1.05" fill="#bbbbbb"/><rect x="15.74" y="179.37" width="4.48" height="1.05" fill="#9cdcfe"/><rect x="20.22" y="179.37" width="0.56" height="1.05" fill="#bbbbbb"/><rect x="20.78" y="179.37" width="2.24" height="1.05" fill="#9cdcfe"/><rect x="23.02" y="179.37" width="0.56" height="1.05" fill="#bbbbbb"/><rect x="9.02" y="180.64" width="1.12" height="1.05" fill="#bbbbbb"/><rect x="10.70" y="180.64" width="1.68" height="1.05" fill="#9cdcfe"/><rect x="12.94" y="180.64" width="1.12" height="1.05" fill="#bbbbbb"/><rect x="14.62" y="180.64" width="0.56" height="1.05" fill="#bbbbbb"/><rect x="11.26" y="181.91" width="3.36" height="1.05" fill="#dcdcaa"/><rect x="14.62" y="181.91" width="0.56" height="1.05" fill="#bbbbbb"/><rect x="15.18" y="181.91" width="1.68" height="1.05" fill="#9cdcfe"/><rect x="16.86" y="181.91" width="0.56" height="1.05" fill="#bbbbbb"/><rect x="9.02" y="183.18" width="1.12" height="1.05" fill="#bbbbbb"/><rect x="9.02" y="184.45" width="0.56" height="1.05" fill="#bbbbbb"/><rect x="9.58" y="184.45" width="2.80" height="1.05" fill="#c586c0"/><rect x="12.38" y="184.45" width="1.12" height="1.05" fill="#bbbbbb"/><rect x="13.50" y="184.45" width="2.80" height="1.05" fill="#9cdcfe"/><rect x="16.30" y="184.45" width="0.56" height="1.05" fill="#bbbbbb"/><rect x="17.42" y="184.45" width="1.12" height="1.05" fill="#bbbbbb"/><rect x="19.10" y="184.45" width="0.56" height="1.05" fill="#bbbbbb"/><rect x="11.26" y="185.72" width="3.36" height="1.05" fill="#dcdcaa"/><rect x="14.62" y="185.72" width="0.56" height="1.05" fill="#bbbbbb"/><rect x="15.18" y="185.72" width="2.80" height="1.05" fill="#9cdcfe"/><rect x="17.98" y="185.72" width="0.56" height="1.05" fill="#bbbbbb"/><rect x="9.02" y="186.99" width="1.12" height="1.05" fill="#bbbbbb"/><rect x="4.54" y="188.26" width="1.12" height="1.05" fill="#bbbbbb"/><rect x="2.30" y="189.53" width="0.56" height="1.05" fill="#bbbbbb"/><rect x="2.30" y="192.07" width="4.48" height="1.05" fill="#569cd6"/><rect x="7.34" y="192.07" width="5.04" height="1.05" fill="#dcdcaa"/><rect x="12.38" y="192.07" width="1.12" height="1.05" fill="#bbbbbb"/><rect x="14.06" y="192.07" width="0.56" height="1.05" fill="#bbbbbb"/><rect x="4.54" y="193.34" width="1.12" height="1.05" fill="#c586c0"/><rect x="6.22" y="193.34" width="0.56" height="1.05" fill="#bbbbbb"/><rect x="6.78" y="193.34" width="7.84" height="1.05" fill="#9cdcfe"/><rect x="14.62" y="193.34" width="0.56" height="1.05" fill="#bbbbbb"/><rect x="15.74" y="193.34" width="0.56" height="1.05" fill="#bbbbbb"/><rect x="6.78" y="194.61" width="3.36" height="1.05" fill="#c586c0"/><rect x="10.70" y="194.61" width="1.68" height="1.05" fill="#569cd6"/><rect x="12.94" y="194.61" width="7.84" height="1.05" fill="#dcdcaa"/><rect x="20.78" y="194.61" width="1.68" height="1.05" fill="#bbbbbb"/><rect x="4.54" y="195.88" width="0.56" height="1.05" fill="#bbbbbb"/><rect x="4.54" y="197.15" width="1.12" height="1.05" fill="#c586c0"/><rect x="6.22" y="197.15" width="0.56" height="1.05" fill="#bbbbbb"/><rect x="6.78" y="197.15" width="7.28" height="1.05" fill="#9cdcfe"/><rect x="14.06" y="197.15" width="0.56" height="1.05" fill="#bbbbbb"/><rect x="15.18" y="197.15" width="0.56" height="1.05" fill="#bbbbbb"/><rect x="6.78" y="198.42" width="1.12" height="1.05" fill="#c586c0"/><rect x="8.46" y="198.42" width="0.56" height="1.05" fill="#bbbbbb"/><rect x="9.02" y="198.42" width="3.36" height="1.05" fill="#569cd6"/><rect x="12.94" y="198.42" width="5.04" height="1.05" fill="#569cd6"/><rect x="17.98" y="198.42" width="0.56" height="1.05" fill="#bbbbbb"/><rect x="18.54" y="198.42" width="3.36" height="1.05" fill="#9cdcfe"/><rect x="21.90" y="198.42" width="0.56" height="1.05" fill="#bbbbbb"/><rect x="22.46" y="198.42" width="7.28" height="1.05" fill="#9cdcfe"/><rect x="30.30" y="198.42" width="1.12" height="1.05" fill="#bbbbbb"/><rect x="31.98" y="198.42" width="4.48" height="1.05" fill="#ce9178"/><rect x="36.46" y="198.42" width="0.56" height="1.05" fill="#bbbbbb"/><rect x="37.58" y="198.42" width="0.56" height="1.05" fill="#bbbbbb"/><rect x="9.02" y="199.69" width="1.68" height="1.05" fill="#569cd6"/><rect x="11.26" y="199.69" width="4.48" height="1.05" fill="#9cdcfe"/><rect x="16.30" y="199.69" width="0.56" height="1.05" fill="#bbbbbb"/><rect x="17.42" y="199.69" width="0.56" height="1.05" fill="#bbbbbb"/><rect x="11.26" y="200.96" width="11.20" height="1.05" fill="#ce9178"/><rect x="22.46" y="200.96" width="0.56" height="1.05" fill="#bbbbbb"/><rect x="11.26" y="202.23" width="8.96" height="1.05" fill="#ce9178"/><rect x="20.22" y="202.23" width="0.56" height="1.05" fill="#bbbbbb"/><rect x="11.26" y="203.50" width="11.20" height="1.05" fill="#ce9178"/><rect x="9.02" y="204.77" width="1.12" height="1.05" fill="#bbbbbb"/><rect x="9.02" y="206.04" width="1.68" height="1.05" fill="#c586c0"/><rect x="11.26" y="206.04" width="0.56" height="1.05" fill="#bbbbbb"/><rect x="11.82" y="206.04" width="1.68" height="1.05" fill="#569cd6"/><rect x="14.06" y="206.04" width="0.56" height="1.05" fill="#9cdcfe"/><rect x="15.18" y="206.04" width="0.56" height="1.05" fill="#bbbbbb"/><rect x="16.30" y="206.04" width="0.56" height="1.05" fill="#b5cea8"/><rect x="16.86" y="206.04" width="0.56" height="1.05" fill="#bbbbbb"/><rect x="17.98" y="206.04" width="0.56" height="1.05" fill="#9cdcfe"/><rect x="19.10" y="206.04" width="0.56" height="1.05" fill="#bbbbbb"/><rect x="20.22" y="206.04" width="4.48" height="1.05" fill="#9cdcfe"/><rect x="24.70" y="206.04" width="0.56" height="1.05" fill="#bbbbbb"/><rect x="25.26" y="206.04" width="3.36" height="1.05" fill="#9cdcfe"/><rect x="28.62" y="206.04" width="0.56" height="1.05" fill="#bbbbbb"/><rect x="29.74" y="206.04" width="0.56" height="1.05" fill="#9cdcfe"/><rect x="30.30" y="206.04" width="1.68" height="1.05" fill="#bbbbbb"/><rect x="32.54" y="206.04" width="0.56" height="1.05" fill="#bbbbbb"/><rect x="11.26" y="207.31" width="1.68" height="1.05" fill="#c586c0"/><rect x="13.50" y="207.31" width="0.56" height="1.05" fill="#bbbbbb"/><rect x="13.50" y="208.58" width="1.68" height="1.05" fill="#569cd6"/><rect x="15.74" y="208.58" width="7.28" height="1.05" fill="#dcdcaa"/><rect x="23.02" y="208.58" width="0.56" height="1.05" fill="#bbbbbb"/><rect x="23.58" y="208.58" width="4.48" height="1.05" fill="#9cdcfe"/><rect x="28.06" y="208.58" width="0.56" height="1.05" fill="#bbbbbb"/><rect x="28.62" y="208.58" width="0.56" height="1.05" fill="#9cdcfe"/><rect x="29.18" y="208.58" width="1.68" height="1.05" fill="#bbbbbb"/><rect x="13.50" y="209.85" width="5.04" height="1.05" fill="#569cd6"/><rect x="18.54" y="209.85" width="0.56" height="1.05" fill="#bbbbbb"/><rect x="19.10" y="209.85" width="3.36" height="1.05" fill="#9cdcfe"/><rect x="22.46" y="209.85" width="0.56" height="1.05" fill="#bbbbbb"/><rect x="23.02" y="209.85" width="7.28" height="1.05" fill="#9cdcfe"/><rect x="30.86" y="209.85" width="0.56" height="1.05" fill="#bbbbbb"/><rect x="31.98" y="209.85" width="4.48" height="1.05" fill="#9cdcfe"/><rect x="36.46" y="209.85" width="0.56" height="1.05" fill="#bbbbbb"/><rect x="37.02" y="209.85" width="0.56" height="1.05" fill="#9cdcfe"/><rect x="37.58" y="209.85" width="1.12" height="1.05" fill="#bbbbbb"/><rect x="13.50" y="211.12" width="2.80" height="1.05" fill="#c586c0"/><rect x="16.30" y="211.12" width="0.56" height="1.05" fill="#bbbbbb"/><rect x="11.26" y="212.39" width="0.56" height="1.05" fill="#bbbbbb"/><rect x="12.38" y="212.39" width="2.80" height="1.05" fill="#c586c0"/><rect x="15.74" y="212.39" width="0.56" height="1.05" fill="#bbbbbb"/><rect x="16.30" y="212.39" width="0.56" height="1.05" fill="#9cdcfe"/><rect x="16.86" y="212.39" width="0.56" height="1.05" fill="#bbbbbb"/><rect x="17.98" y="212.39" width="0.56" height="1.05" fill="#bbbbbb"/><rect x="13.50" y="213.66" width="3.92" height="1.05" fill="#9cdcfe"/><rect x="17.42" y="213.66" width="0.56" height="1.05" fill="#bbbbbb"/><rect x="17.98" y="213.66" width="1.68" height="1.05" fill="#dcdcaa"/><rect x="19.66" y="213.66" width="0.56" height="1.05" fill="#bbbbbb"/><rect x="20.22" y="213.66" width="0.56" height="1.05" fill="#9cdcfe"/><rect x="20.78" y="213.66" width="1.12" height="1.05" fill="#bbbbbb"/><rect x="11.26" y="214.93" width="0.56" height="1.05" fill="#bbbbbb"/><rect x="9.02" y="216.20" width="0.56" height="1.05" fill="#bbbbbb"/><rect x="6.78" y="217.47" width="0.56" height="1.05" fill="#bbbbbb"/><rect x="6.78" y="218.74" width="3.36" height="1.05" fill="#c586c0"/><rect x="10.70" y="218.74" width="1.68" height="1.05" fill="#569cd6"/><rect x="12.94" y="218.74" width="7.28" height="1.05" fill="#dcdcaa"/><rect x="20.22" y="218.74" width="0.56" height="1.05" fill="#bbbbbb"/><rect x="20.78" y="218.74" width="5.04" height="1.05" fill="#569cd6"/><rect x="25.82" y="218.74" width="0.56" height="1.05" fill="#bbbbbb"/><rect x="26.38" y="218.74" width="3.36" height="1.05" fill="#9cdcfe"/><rect x="29.74" y="218.74" width="0.56" height="1.05" fill="#bbbbbb"/><rect x="30.30" y="218.74" width="7.28" height="1.05" fill="#9cdcfe"/><rect x="37.58" y="218.74" width="1.12" height="1.05" fill="#bbbbbb"/><rect x="4.54" y="220.01" width="0.56" height="1.05" fill="#bbbbbb"/><rect x="2.30" y="221.28" width="0.56" height="1.05" fill="#bbbbbb"/><rect x="2.30" y="223.82" width="4.48" height="1.05" fill="#569cd6"/><rect x="7.34" y="223.82" width="4.48" height="1.05" fill="#dcdcaa"/><rect x="11.82" y="223.82" width="0.56" height="1.05" fill="#bbbbbb"/><rect x="12.38" y="223.82" width="6.72" height="1.05" fill="#9cdcfe"/><rect x="19.10" y="223.82" width="0.56" height="1.05" fill="#bbbbbb"/><rect x="20.22" y="223.82" width="3.92" height="1.05" fill="#9cdcfe"/><rect x="24.14" y="223.82" width="0.56" height="1.05" fill="#bbbbbb"/><rect x="25.26" y="223.82" width="0.56" height="1.05" fill="#bbbbbb"/><rect x="4.54" y="225.09" width="1.68" height="1.05" fill="#c586c0"/><rect x="6.78" y="225.09" width="0.56" height="1.05" fill="#bbbbbb"/><rect x="6.78" y="226.36" width="1.68" height="1.05" fill="#569cd6"/><rect x="9.02" y="226.36" width="6.72" height="1.05" fill="#9cdcfe"/><rect x="16.30" y="226.36" width="0.56" height="1.05" fill="#bbbbbb"/><rect x="17.42" y="226.36" width="3.36" height="1.05" fill="#569cd6"/><rect x="21.34" y="226.36" width="6.72" height="1.05" fill="#9cdcfe"/><rect x="28.62" y="226.36" width="1.12" height="1.05" fill="#bbbbbb"/><rect x="30.30" y="226.36" width="4.48" height="1.05" fill="#ce9178"/><rect x="35.34" y="226.36" width="0.56" height="1.05" fill="#bbbbbb"/><rect x="36.46" y="226.36" width="2.24" height="1.05" fill="#4fc1ff"/><rect x="38.70" y="226.36" width="0.56" height="1.05" fill="#bbbbbb"/><rect x="39.26" y="226.36" width="2.80" height="1.05" fill="#dcdcaa"/><rect x="42.06" y="226.36" width="0.56" height="1.05" fill="#bbbbbb"/><rect x="42.62" y="226.36" width="6.72" height="1.05" fill="#9cdcfe"/><rect x="49.34" y="226.36" width="0.56" height="1.05" fill="#bbbbbb"/><rect x="50.46" y="226.36" width="0.56" height="1.05" fill="#bbbbbb"/><rect x="51.58" y="226.36" width="6.72" height="1.05" fill="#9cdcfe"/><rect x="58.30" y="226.36" width="0.56" height="1.05" fill="#bbbbbb"/><rect x="6.78" y="227.63" width="1.12" height="1.05" fill="#c586c0"/><rect x="8.46" y="227.63" width="1.12" height="1.05" fill="#bbbbbb"/><rect x="9.58" y="227.63" width="6.72" height="1.05" fill="#9cdcfe"/><rect x="16.30" y="227.63" width="0.56" height="1.05" fill="#bbbbbb"/><rect x="16.86" y="227.63" width="7.84" height="1.05" fill="#dcdcaa"/><rect x="24.70" y="227.63" width="0.56" height="1.05" fill="#bbbbbb"/><rect x="25.26" y="227.63" width="6.16" height="1.05" fill="#ce9178"/><rect x="31.42" y="227.63" width="0.56" height="1.05" fill="#bbbbbb"/><rect x="32.54" y="227.63" width="1.12" height="1.05" fill="#bbbbbb"/><rect x="34.22" y="227.63" width="6.72" height="1.05" fill="#9cdcfe"/><rect x="40.94" y="227.63" width="0.56" height="1.05" fill="#bbbbbb"/><rect x="41.50" y="227.63" width="5.04" height="1.05" fill="#9cdcfe"/><rect x="46.54" y="227.63" width="1.12" height="1.05" fill="#bbbbbb"/><rect x="48.22" y="227.63" width="0.56" height="1.05" fill="#bbbbbb"/><rect x="9.02" y="228.90" width="3.92" height="1.05" fill="#dcdcaa"/><rect x="12.94" y="228.90" width="1.68" height="1.05" fill="#bbbbbb"/><rect x="9.02" y="230.17" width="3.36" height="1.05" fill="#c586c0"/><rect x="12.38" y="230.17" width="0.56" height="1.05" fill="#bbbbbb"/><rect x="6.78" y="231.44" width="0.56" height="1.05" fill="#bbbbbb"/><rect x="6.78" y="232.71" width="1.12" height="1.05" fill="#c586c0"/><rect x="8.46" y="232.71" width="0.56" height="1.05" fill="#bbbbbb"/><rect x="9.02" y="232.71" width="3.92" height="1.05" fill="#9cdcfe"/><rect x="12.94" y="232.71" width="0.56" height="1.05" fill="#bbbbbb"/><rect x="14.06" y="232.71" width="0.56" height="1.05" fill="#bbbbbb"/><rect x="9.02" y="233.98" width="3.92" height="1.05" fill="#9cdcfe"/><rect x="12.94" y="233.98" width="0.56" height="1.05" fill="#bbbbbb"/><rect x="13.50" y="233.98" width="2.80" height="1.05" fill="#dcdcaa"/><rect x="16.30" y="233.98" width="1.12" height="1.05" fill="#bbbbbb"/><rect x="11.26" y="235.25" width="5.04" height="1.05" fill="#9cdcfe"/><rect x="16.30" y="235.25" width="0.56" height="1.05" fill="#bbbbbb"/><rect x="17.42" y="235.25" width="2.24" height="1.05" fill="#569cd6"/><rect x="19.66" y="235.25" width="0.56" height="1.05" fill="#bbbbbb"/><rect x="11.26" y="236.52" width="3.92" height="1.05" fill="#9cdcfe"/><rect x="15.18" y="236.52" width="0.56" height="1.05" fill="#bbbbbb"/><rect x="16.30" y="236.52" width="6.72" height="1.05" fill="#9cdcfe"/><rect x="23.02" y="236.52" width="0.56" height="1.05" fill="#bbbbbb"/><rect x="23.58" y="236.52" width="3.92" height="1.05" fill="#9cdcfe"/><rect x="27.50" y="236.52" width="0.56" height="1.05" fill="#bbbbbb"/><rect x="11.26" y="237.79" width="2.24" height="1.05" fill="#9cdcfe"/><rect x="13.50" y="237.79" width="0.56" height="1.05" fill="#bbbbbb"/><rect x="14.62" y="237.79" width="3.92" height="1.05" fill="#ce9178"/><rect x="9.02" y="239.06" width="1.68" height="1.05" fill="#bbbbbb"/><rect x="6.78" y="240.33" width="0.56" height="1.05" fill="#bbbbbb"/><rect x="4.54" y="241.60" width="0.56" height="1.05" fill="#bbbbbb"/><rect x="5.66" y="241.60" width="2.80" height="1.05" fill="#c586c0"/><rect x="9.02" y="241.60" width="0.56" height="1.05" fill="#bbbbbb"/><rect x="9.58" y="241.60" width="2.80" height="1.05" fill="#9cdcfe"/><rect x="12.38" y="241.60" width="0.56" height="1.05" fill="#bbbbbb"/><rect x="13.50" y="241.60" width="0.56" height="1.05" fill="#bbbbbb"/><rect x="6.78" y="242.87" width="3.92" height="1.05" fill="#9cdcfe"/><rect x="10.70" y="242.87" width="0.56" height="1.05" fill="#bbbbbb"/><rect x="11.26" y="242.87" width="1.68" height="1.05" fill="#dcdcaa"/><rect x="12.94" y="242.87" width="0.56" height="1.05" fill="#bbbbbb"/><rect x="13.50" y="242.87" width="2.80" height="1.05" fill="#9cdcfe"/><rect x="16.30" y="242.87" width="1.12" height="1.05" fill="#bbbbbb"/><rect x="6.78" y="244.14" width="3.92" height="1.05" fill="#9cdcfe"/><rect x="10.70" y="244.14" width="0.56" height="1.05" fill="#bbbbbb"/><rect x="11.26" y="244.14" width="2.80" height="1.05" fill="#dcdcaa"/><rect x="14.06" y="244.14" width="1.12" height="1.05" fill="#bbbbbb"/><rect x="9.02" y="245.41" width="5.04" height="1.05" fill="#9cdcfe"/><rect x="14.06" y="245.41" width="0.56" height="1.05" fill="#bbbbbb"/><rect x="15.18" y="245.41" width="2.24" height="1.05" fill="#569cd6"/><rect x="17.42" y="245.41" width="0.56" height="1.05" fill="#bbbbbb"/><rect x="9.02" y="246.68" width="3.92" height="1.05" fill="#9cdcfe"/><rect x="12.94" y="246.68" width="0.56" height="1.05" fill="#bbbbbb"/><rect x="14.06" y="246.68" width="6.72" height="1.05" fill="#9cdcfe"/><rect x="20.78" y="246.68" width="0.56" height="1.05" fill="#bbbbbb"/><rect x="9.02" y="247.95" width="2.24" height="1.05" fill="#9cdcfe"/><rect x="11.26" y="247.95" width="0.56" height="1.05" fill="#bbbbbb"/><rect x="12.38" y="247.95" width="3.92" height="1.05" fill="#ce9178"/><rect x="6.78" y="249.22" width="1.68" height="1.05" fill="#bbbbbb"/><rect x="4.54" y="250.49" width="0.56" height="1.05" fill="#bbbbbb"/><rect x="2.30" y="251.76" width="0.56" height="1.05" fill="#bbbbbb"/><rect x="2.30" y="254.30" width="4.48" height="1.05" fill="#569cd6"/><rect x="7.34" y="254.30" width="3.92" height="1.05" fill="#dcdcaa"/><rect x="11.26" y="254.30" width="1.12" height="1.05" fill="#bbbbbb"/><rect x="12.94" y="254.30" width="0.56" height="1.05" fill="#bbbbbb"/><rect x="4.54" y="255.57" width="2.80" height="1.05" fill="#569cd6"/><rect x="7.90" y="255.57" width="5.60" height="1.05" fill="#9cdcfe"/><rect x="14.06" y="255.57" width="0.56" height="1.05" fill="#bbbbbb"/><rect x="15.18" y="255.57" width="3.36" height="1.05" fill="#9cdcfe"/><rect x="18.54" y="255.57" width="0.56" height="1.05" fill="#bbbbbb"/><rect x="19.10" y="255.57" width="4.48" height="1.05" fill="#9cdcfe"/><rect x="23.58" y="255.57" width="0.56" height="1.05" fill="#bbbbbb"/><rect x="24.14" y="255.57" width="2.24" height="1.05" fill="#9cdcfe"/><rect x="26.38" y="255.57" width="0.56" height="1.05" fill="#bbbbbb"/><rect x="4.54" y="256.84" width="3.36" height="1.05" fill="#9cdcfe"/><rect x="7.90" y="256.84" width="0.56" height="1.05" fill="#bbbbbb"/><rect x="8.46" y="256.84" width="2.24" height="1.05" fill="#dcdcaa"/><rect x="10.70" y="256.84" width="1.12" height="1.05" fill="#bbbbbb"/><rect x="12.38" y="256.84" width="2.24" height="1.05" fill="#9cdcfe"/><rect x="14.62" y="256.84" width="0.56" height="1.05" fill="#bbbbbb"/><rect x="15.74" y="256.84" width="4.48" height="1.05" fill="#ce9178"/><rect x="20.22" y="256.84" width="0.56" height="1.05" fill="#bbbbbb"/><rect x="21.34" y="256.84" width="2.80" height="1.05" fill="#9cdcfe"/><rect x="24.14" y="256.84" width="0.56" height="1.05" fill="#bbbbbb"/><rect x="25.26" y="256.84" width="0.56" height="1.05" fill="#bbbbbb"/><rect x="26.38" y="256.84" width="4.48" height="1.05" fill="#9cdcfe"/><rect x="30.86" y="256.84" width="0.56" height="1.05" fill="#bbbbbb"/><rect x="31.98" y="256.84" width="2.24" height="1.05" fill="#9cdcfe"/><rect x="34.22" y="256.84" width="0.56" height="1.05" fill="#bbbbbb"/><rect x="34.78" y="256.84" width="3.36" height="1.05" fill="#dcdcaa"/><rect x="38.14" y="256.84" width="1.12" height="1.05" fill="#bbbbbb"/><rect x="39.82" y="256.84" width="0.56" height="1.05" fill="#bbbbbb"/><rect x="40.94" y="256.84" width="1.68" height="1.05" fill="#bbbbbb"/><rect x="2.30" y="258.11" width="0.56" height="1.05" fill="#bbbbbb"/><rect x="2.30" y="259.38" width="8.40" height="1.05" fill="#6a9955"/><rect x="2.30" y="260.65" width="4.48" height="1.05" fill="#569cd6"/><rect x="7.34" y="260.65" width="6.72" height="1.05" fill="#dcdcaa"/><rect x="14.06" y="260.65" width="1.12" height="1.05" fill="#bbbbbb"/><rect x="15.74" y="260.65" width="0.56" height="1.05" fill="#bbbbbb"/><rect x="4.54" y="261.92" width="2.24" height="1.05" fill="#dcdcaa"/><rect x="6.78" y="261.92" width="1.12" height="1.05" fill="#bbbbbb"/><rect x="6.78" y="263.19" width="1.68" height="1.05" fill="#9cdcfe"/><rect x="8.46" y="263.19" width="0.56" height="1.05" fill="#bbbbbb"/><rect x="9.58" y="263.19" width="13.44" height="1.05" fill="#ce9178"/><rect x="23.02" y="263.19" width="0.56" height="1.05" fill="#bbbbbb"/><rect x="6.78" y="264.46" width="2.80" height="1.05" fill="#9cdcfe"/><rect x="9.58" y="264.46" width="0.56" height="1.05" fill="#bbbbbb"/><rect x="10.70" y="264.46" width="1.68" height="1.05" fill="#bbbbbb"/><rect x="6.78" y="265.73" width="2.24" height="1.05" fill="#9cdcfe"/><rect x="9.02" y="265.73" width="0.56" height="1.05" fill="#bbbbbb"/><rect x="10.14" y="265.73" width="2.24" height="1.05" fill="#569cd6"/><rect x="12.38" y="265.73" width="0.56" height="1.05" fill="#bbbbbb"/><rect x="6.78" y="267.00" width="3.92" height="1.05" fill="#9cdcfe"/><rect x="10.70" y="267.00" width="0.56" height="1.05" fill="#bbbbbb"/><rect x="11.82" y="267.00" width="4.48" height="1.05" fill="#569cd6"/><rect x="16.86" y="267.00" width="0.56" height="1.05" fill="#bbbbbb"/><rect x="17.42" y="267.00" width="0.56" height="1.05" fill="#9cdcfe"/><rect x="17.98" y="267.00" width="0.56" height="1.05" fill="#bbbbbb"/><rect x="19.10" y="267.00" width="0.56" height="1.05" fill="#bbbbbb"/><rect x="9.02" y="268.27" width="1.12" height="1.05" fill="#c586c0"/><rect x="10.70" y="268.27" width="0.56" height="1.05" fill="#bbbbbb"/><rect x="11.26" y="268.27" width="0.56" height="1.05" fill="#9cdcfe"/><rect x="11.82" y="268.27" width="0.56" height="1.05" fill="#bbbbbb"/><rect x="12.38" y="268.27" width="3.36" height="1.05" fill="#9cdcfe"/><rect x="15.74" y="268.27" width="0.56" height="1.05" fill="#bbbbbb"/><rect x="16.86" y="268.27" width="0.56" height="1.05" fill="#bbbbbb"/><rect x="11.26" y="269.54" width="1.68" height="1.05" fill="#569cd6"/><rect x="13.50" y="269.54" width="4.48" height="1.05" fill="#9cdcfe"/><rect x="18.54" y="269.54" width="0.56" height="1.05" fill="#bbbbbb"/><rect x="19.66" y="269.54" width="2.80" height="1.05" fill="#9cdcfe"/><rect x="22.46" y="269.54" width="0.56" height="1.05" fill="#bbbbbb"/><rect x="23.02" y="269.54" width="3.92" height="1.05" fill="#9cdcfe"/><rect x="26.94" y="269.54" width="0.56" height="1.05" fill="#bbbbbb"/><rect x="27.50" y="269.54" width="6.16" height="1.05" fill="#dcdcaa"/><rect x="33.66" y="269.54" width="1.68" height="1.05" fill="#bbbbbb"/><rect x="11.26" y="270.81" width="4.48" height="1.05" fill="#9cdcfe"/><rect x="15.74" y="270.81" width="0.56" height="1.05" fill="#bbbbbb"/><rect x="16.30" y="270.81" width="2.80" height="1.05" fill="#9cdcfe"/><rect x="19.66" y="270.81" width="0.56" height="1.05" fill="#bbbbbb"/><rect x="20.78" y="270.81" width="0.56" height="1.05" fill="#9cdcfe"/><rect x="21.34" y="270.81" width="0.56" height="1.05" fill="#bbbbbb"/><rect x="21.90" y="270.81" width="2.24" height="1.05" fill="#9cdcfe"/><rect x="24.14" y="270.81" width="0.56" height="1.05" fill="#bbbbbb"/><rect x="11.26" y="272.08" width="2.80" height="1.05" fill="#9cdcfe"/><rect x="14.06" y="272.08" width="0.56" height="1.05" fill="#bbbbbb"/><rect x="14.62" y="272.08" width="3.36" height="1.05" fill="#dcdcaa"/><rect x="17.98" y="272.08" width="0.56" height="1.05" fill="#bbbbbb"/><rect x="18.54" y="272.08" width="7.28" height="1.05" fill="#ce9178"/><rect x="25.82" y="272.08" width="0.56" height="1.05" fill="#bbbbbb"/><rect x="26.94" y="272.08" width="4.48" height="1.05" fill="#9cdcfe"/><rect x="31.42" y="272.08" width="1.12" height="1.05" fill="#bbbbbb"/><rect x="11.26" y="273.35" width="3.36" height="1.05" fill="#c586c0"/><rect x="14.62" y="273.35" width="0.56" height="1.05" fill="#bbbbbb"/><rect x="9.02" y="274.62" width="0.56" height="1.05" fill="#bbbbbb"/><rect x="9.02" y="275.89" width="3.92" height="1.05" fill="#9cdcfe"/><rect x="12.94" y="275.89" width="0.56" height="1.05" fill="#bbbbbb"/><rect x="13.50" y="275.89" width="1.68" height="1.05" fill="#dcdcaa"/><rect x="15.18" y="275.89" width="0.56" height="1.05" fill="#bbbbbb"/><rect x="15.74" y="275.89" width="0.56" height="1.05" fill="#9cdcfe"/><rect x="16.30" y="275.89" width="0.56" height="1.05" fill="#bbbbbb"/><rect x="16.86" y="275.89" width="3.92" height="1.05" fill="#9cdcfe"/><rect x="20.78" y="275.89" width="1.12" height="1.05" fill="#bbbbbb"/><rect x="9.02" y="277.16" width="3.92" height="1.05" fill="#dcdcaa"/><rect x="12.94" y="277.16" width="1.68" height="1.05" fill="#bbbbbb"/><rect x="6.78" y="278.43" width="1.12" height="1.05" fill="#bbbbbb"/><rect x="6.78" y="279.70" width="2.24" height="1.05" fill="#9cdcfe"/><rect x="9.02" y="279.70" width="0.56" height="1.05" fill="#bbbbbb"/><rect x="10.14" y="279.70" width="3.36" height="1.05" fill="#ce9178"/><rect x="13.50" y="279.70" width="0.56" height="1.05" fill="#bbbbbb"/><rect x="6.78" y="280.97" width="2.80" height="1.05" fill="#9cdcfe"/><rect x="9.58" y="280.97" width="0.56" height="1.05" fill="#bbbbbb"/><rect x="10.70" y="280.97" width="2.80" height="1.05" fill="#569cd6"/><rect x="4.54" y="282.24" width="1.68" height="1.05" fill="#bbbbbb"/><rect x="2.30" y="283.51" width="0.56" height="1.05" fill="#bbbbbb"/><rect x="2.30" y="286.05" width="4.48" height="1.05" fill="#569cd6"/><rect x="7.34" y="286.05" width="2.24" height="1.05" fill="#dcdcaa"/><rect x="9.58" y="286.05" width="0.56" height="1.05" fill="#bbbbbb"/><rect x="10.14" y="286.05" width="2.80" height="1.05" fill="#9cdcfe"/><rect x="12.94" y="286.05" width="0.56" height="1.05" fill="#bbbbbb"/><rect x="14.06" y="286.05" width="0.56" height="1.05" fill="#bbbbbb"/><rect x="4.54" y="287.32" width="1.68" height="1.05" fill="#569cd6"/><rect x="6.78" y="287.32" width="5.04" height="1.05" fill="#9cdcfe"/><rect x="12.38" y="287.32" width="0.56" height="1.05" fill="#bbbbbb"/><rect x="6.78" y="288.59" width="3.36" height="1.05" fill="#9cdcfe"/><rect x="10.14" y="288.59" width="0.56" height="1.05" fill="#bbbbbb"/><rect x="10.70" y="288.59" width="3.36" height="1.05" fill="#dcdcaa"/><rect x="14.06" y="288.59" width="1.12" height="1.05" fill="#bbbbbb"/><rect x="9.02" y="289.86" width="1.68" height="1.05" fill="#9cdcfe"/><rect x="10.70" y="289.86" width="0.56" height="1.05" fill="#bbbbbb"/><rect x="11.82" y="289.86" width="1.12" height="1.05" fill="#ce9178"/><rect x="12.94" y="289.86" width="0.56" height="1.05" fill="#bbbbbb"/><rect x="14.06" y="289.86" width="3.92" height="1.05" fill="#9cdcfe"/><rect x="17.98" y="289.86" width="0.56" height="1.05" fill="#bbbbbb"/><rect x="19.10" y="289.86" width="1.68" height="1.05" fill="#bbbbbb"/><rect x="9.02" y="291.13" width="2.80" height="1.05" fill="#9cdcfe"/><rect x="11.82" y="291.13" width="0.56" height="1.05" fill="#bbbbbb"/><rect x="12.94" y="291.13" width="1.68" height="1.05" fill="#bbbbbb"/><rect x="15.18" y="291.13" width="2.24" height="1.05" fill="#9cdcfe"/><rect x="17.42" y="291.13" width="0.56" height="1.05" fill="#bbbbbb"/><rect x="18.54" y="291.13" width="2.24" height="1.05" fill="#569cd6"/><rect x="20.78" y="291.13" width="0.56" height="1.05" fill="#bbbbbb"/></g></svg>
<div class="a" style="left:1070.3px;top:65px;width:0.8px;height:293px;background:#2b2b2b;"></div>
<div class="a" style="left:1071px;top:82.2px;width:9px;height:1.6px;background:#a0a0a0;"></div>
<div class="a" style="left:190.4px;top:234.4px;width:245.8px;height:17.2px;background:#202020;border:0.8px solid #454545;border-radius:3px;box-shadow:0 1px 4px rgba(0,0,0,0.5)"></div>
<div class="a" style="left:196.9px;top:238.09px;line-height:11.83px;font-size:9.1px;color:#cccccc;letter-spacing:-0.4px">F:\2025.3.2\客户\MES\开发版dev3\Mes.Vue33\src\components</div>
<div class="a" style="left:258.6px;top:367.23px;line-height:10.14px;font-size:7.8px;color:#9d9d9d;">问题</div>
<div class="a" style="left:290.9px;top:367.23px;line-height:10.14px;font-size:7.8px;color:#9d9d9d;">输出</div>
<div class="a" style="left:322.8px;top:367.23px;line-height:10.14px;font-size:7.8px;color:#9d9d9d;">调试控制台</div>
<div class="a" style="left:379.2px;top:367.23px;line-height:10.14px;font-size:7.8px;color:#e7e7e7;">终端</div>
<div class="a" style="left:411.5px;top:367.23px;line-height:10.14px;font-size:7.8px;color:#9d9d9d;">端口</div>
<div class="a" style="left:377.4px;top:377.6px;width:18.5px;height:0.9px;background:#0078d4;"></div>
<svg class="ic" style="left:926px;top:366px;" width="11" height="10" viewBox="0 0 11 10"><rect x="0.5" y="0.5" width="9.5" height="9" rx="1" stroke="#cccccc" stroke-width="0.9" fill="none"/><path d="M5.25 0.5 V9.5" stroke="#cccccc" stroke-width="0.9"/></svg>
<svg class="ic" style="left:939px;top:369.5px;" width="6" height="4" viewBox="0 0 6 4"><path d="M0.5 0.6 L3 3 L5.5 0.6" stroke="#cccccc" stroke-width="0.9" fill="none"/></svg>
<svg class="ic" style="left:952.7px;top:366px;" width="10" height="10" viewBox="0 0 10 10"><rect x="0.5" y="0.5" width="9" height="9" rx="1" stroke="#cccccc" stroke-width="0.9" fill="none"/><path d="M5 0.5 V9.5" stroke="#cccccc" stroke-width="0.9"/></svg>
<div class="a" style="left:965.5px;top:366.64px;line-height:10.92px;font-size:8.4px;color:#cccccc;">node</div>
<svg class="ic" style="left:989.8px;top:366px;" width="10" height="10" viewBox="0 0 10 10"><rect x="0.5" y="0.5" width="9" height="9" rx="1" stroke="#cccccc" stroke-width="0.9" fill="none"/><path d="M5 0.5 V9.5" stroke="#cccccc" stroke-width="0.9"/></svg>
<svg class="ic" style="left:1006.7px;top:365.8px;" width="8" height="10" viewBox="0 0 8 10"><path d="M0.3 2 H7.5 M2.6 2 V0.6 H5.2 V2 M1.1 2 L1.5 9.3 H6.3 L6.7 2 M3 3.8 V7.6 M4.8 3.8 V7.6" stroke="#cccccc" stroke-width="0.85" fill="none"/></svg>
<svg class="ic" style="left:1022px;top:368.8px;" width="12" height="4" viewBox="0 0 12 4"><circle cx="2" cy="2" r="0.8" fill="#cccccc"/><circle cx="5.7" cy="2" r="0.8" fill="#cccccc"/><circle cx="9.4" cy="2" r="0.8" fill="#cccccc"/></svg>
<svg class="ic" style="left:1041.9px;top:368.5px;" width="8" height="5" viewBox="0 0 8 5"><path d="M0.5 4.3 L3.8 0.8 L7.1 4.3" stroke="#cccccc" stroke-width="0.9" fill="none"/></svg>
<svg class="ic" style="left:1060.7px;top:367.5px;" width="7" height="7" viewBox="0 0 7 7"><path d="M0.3 0.3 L6.7 6.7 M6.7 0.3 L0.3 6.7" stroke="#cccccc" stroke-width="0.9"/></svg>
<div class="a" style="left:258.5px;top:390.5px;width:30.4px;height:12.5px;background:#20c88a;"></div>
<div class="a mono" style="left:263.6px;top:392.6px;line-height:12.6px;font-size:9px;color:#0e3b2a;letter-spacing:-0.33px">DONE</div>
<div class="a mono" style="left:294px;top:391.90px;line-height:12.6px;font-size:9.0px;letter-spacing:-0.33px"><span style="color:#23d18b;">Compiled successfully in 725ms</span></div>
<div class="a mono" style="left:269.1px;top:429.70px;line-height:12.6px;font-size:9.0px;letter-spacing:-0.33px"><span style="color:#cccccc;">App running at:</span></div>
<div class="a mono" style="left:269.1px;top:442.20px;line-height:12.6px;font-size:9.0px;letter-spacing:-0.33px"><span style="color:#cccccc;">- Local:   </span><span style="color:#11a8cd;">http://localhost:</span><span style="color:#29b8db;font-weight:bold">9990</span><span style="color:#11a8cd;">/</span></div>
<div class="a mono" style="left:269.1px;top:454.60px;line-height:12.6px;font-size:9.0px;letter-spacing:-0.33px"><span style="color:#cccccc;">- Network: </span><span style="color:#11a8cd;">http://192.168.1.107:</span><span style="color:#29b8db;font-weight:bold">9990</span><span style="color:#11a8cd;">/</span></div>
<div class="a mono" style="left:1028.7px;top:393.00px;line-height:12.6px;font-size:9.0px;letter-spacing:-0.33px"><span style="color:#8a8a8a;">21:25:25</span></div>
<div class="a" style="left:1070.6px;top:390.5px;width:0.8px;height:173px;background:#2b2b2b;"></div>
<svg class="ic" style="left:8px;top:566px;" width="9" height="10" viewBox="0 0 9 10"><path d="M1.1 3.1 L4.6 5.3 L1.1 8.9" stroke="#ffffff" stroke-width="0.85" fill="none"/><path d="M7.2 0.8 L4.3 3.4 L7.2 6.3" stroke="#ffffff" stroke-width="0.85" fill="none"/></svg>
<svg class="ic" style="left:29.8px;top:567.2px;" width="10" height="10" viewBox="0 0 10 10"><circle cx="4.8" cy="4.8" r="4.2" stroke="#cccccc" stroke-width="0.9" fill="none"/><path d="M3 3 L6.6 6.6 M6.6 3 L3 6.6" stroke="#cccccc" stroke-width="0.9"/></svg>
<div class="a" style="left:41.8px;top:566.09px;line-height:11.83px;font-size:9.1px;color:#cccccc;">0</div>
<svg class="ic" style="left:48.8px;top:566px;" width="10" height="10" viewBox="0 0 10 10"><path d="M4.8 0.8 L9.2 8.9 H0.4 Z" stroke="#cccccc" stroke-width="0.9" fill="none" stroke-linejoin="round"/><path d="M4.8 3.5 V6.3" stroke="#cccccc" stroke-width="0.9"/><circle cx="4.8" cy="7.5" r="0.5" fill="#cccccc"/></svg>
<div class="a" style="left:60.8px;top:566.09px;line-height:11.83px;font-size:9.1px;color:#cccccc;">0</div>
<div class="a" style="left:824.8px;top:567.27px;line-height:10.66px;font-size:8.2px;color:#cccccc;letter-spacing:0px">行 23<span style="display:inline-block;width:8.2px">,</span>列 2</div>
<div class="a" style="left:878.7px;top:567.27px;line-height:10.66px;font-size:8.2px;color:#cccccc;letter-spacing:0px">空格: 4</div>
<div class="a" style="left:916.3px;top:567.27px;line-height:10.66px;font-size:8.2px;color:#cccccc;letter-spacing:-0.4px">UTF-8</div>
<div class="a" style="left:950px;top:567.27px;line-height:10.66px;font-size:8.2px;color:#cccccc;letter-spacing:-0.8px">CRLF</div>
<div class="a" style="left:991.6px;top:567.27px;line-height:10.66px;font-size:8.2px;color:#cccccc;letter-spacing:0px">JavaScript</div>
<svg class="ic" style="left:978.7px;top:567.3px;" width="9" height="9" viewBox="0 0 9 9"><path d="M2.9 0.5 Q1.7 0.5 1.7 1.7 V2.9 Q1.7 4 0.4 4 Q1.7 4 1.7 5.1 V6.3 Q1.7 7.5 2.9 7.5 M6.1 0.5 Q7.3 0.5 7.3 1.7 V2.9 Q7.3 4 8.6 4 Q7.3 4 7.3 5.1 V6.3 Q7.3 7.5 6.1 7.5" stroke="#cccccc" stroke-width="0.85" fill="none"/></svg>
<svg class="ic" style="left:1038px;top:567px;" width="11" height="9" viewBox="0 0 11 9"><path d="M1.3 3.9 C0.6 4.3 0.4 4.9 0.4 5.5 V7 C1.6 8.2 3.4 8.7 5.5 8.7 C7.6 8.7 9.4 8.2 10.6 7 V5.5 C10.6 4.9 10.4 4.3 9.7 3.9" stroke="#cccccc" stroke-width="0.9" fill="none"/><rect x="1.5" y="0.6" width="3.7" height="3.5" rx="1.2" stroke="#cccccc" stroke-width="0.9" fill="none"/><rect x="5.8" y="0.6" width="3.7" height="3.5" rx="1.2" stroke="#cccccc" stroke-width="0.9" fill="none"/><path d="M4 5.6 V7 M7 5.6 V7" stroke="#cccccc" stroke-width="0.9"/></svg>
<svg class="ic" style="left:1060.7px;top:566.3px;" width="9" height="11" viewBox="0 0 9 11"><path d="M1 7.8 V4.8 C1 2.5 2.5 1.2 4.3 1.2 C6.1 1.2 7.6 2.5 7.6 4.8 V7.8 L8.4 8.6 H0.2 Z" stroke="#cccccc" stroke-width="0.9" fill="none" stroke-linejoin="round"/><path d="M3.2 9.6 H5.4" stroke="#cccccc" stroke-width="0.9"/></svg>
<div class="a" style="left:619.2px;top:560.1px;width:98.5px;height:17.4px;background:#f4f6f8;border-radius:1px"></div>
<svg class="ic" style="left:602px;top:557.5px;" width="21" height="21" viewBox="0 0 21 21"><rect x="2.2" y="2.2" width="16.6" height="16.6" rx="2.5" fill="#36b928" transform="rotate(-16 10.5 10.5)"/><path d="M15.6 6.3 C13.5 4.6 5.8 5.2 5.2 8.1 C4.6 11 15.6 9.8 15.3 12.8 C15 15.6 7.5 16.3 5.4 14.6" stroke="#ffffff" stroke-width="2.5" fill="none" stroke-linecap="round"/></svg>
<div class="a" style="left:626.3px;top:562.80px;line-height:13.39px;font-size:10.3px;color:#3d4255;font-weight:bold">英</div>
<svg class="ic" style="left:642.5px;top:563.5px;" width="10" height="10" viewBox="0 0 10 10"><path d="M6.5 0.5 C9.5 1.6 10.3 5.5 8.3 7.9 C6.3 10.2 2.3 10 0.5 7.6 C3.6 8.5 6.6 6.7 7 3.6 C7.2 2.4 7 1.4 6.5 0.5 Z" fill="#3d4255"/></svg>
<div class="a" style="left:659.3px;top:565px;width:1.8px;height:1.8px;background:#3d4255;border-radius:50%"></div>
<svg class="ic" style="left:663px;top:566px;" width="4" height="5" viewBox="0 0 4 5"><path d="M2.2 0.5 C3.6 0.8 3.5 3 1 4.3" stroke="#3d4255" stroke-width="1.3" fill="none"/></svg>
<svg class="ic" style="left:672px;top:564.3px;" width="12" height="9" viewBox="0 0 12 9"><rect x="0.5" y="0.5" width="11" height="8" rx="0.8" stroke="#3d4255" stroke-width="1" fill="none"/><path d="M2 2.4 H10 M2 4.5 H10 M3 6.6 H9" stroke="#3d4255" stroke-width="1" stroke-dasharray="1 0.6"/></svg>
<svg class="ic" style="left:690.5px;top:563.5px;" width="8" height="10" viewBox="0 0 8 10"><circle cx="4" cy="2.2" r="2" fill="#3d4255"/><path d="M0 9.8 C0 6 1.5 4.8 4 4.8 C6.5 4.8 8 6 8 9.8 Z" fill="#3d4255"/></svg>
<svg class="ic" style="left:703.8px;top:563.8px;" width="10" height="10" viewBox="0 0 10 10"><circle cx="2.6" cy="2.6" r="2.3" fill="#3d4255"/><circle cx="7.4" cy="2.6" r="2.3" fill="none" stroke="#3d4255" stroke-width="0.9"/><circle cx="2.6" cy="7.4" r="2.3" fill="#3d4255"/><circle cx="7.4" cy="7.4" r="2.3" fill="#3d4255"/></svg>
</body></html>
